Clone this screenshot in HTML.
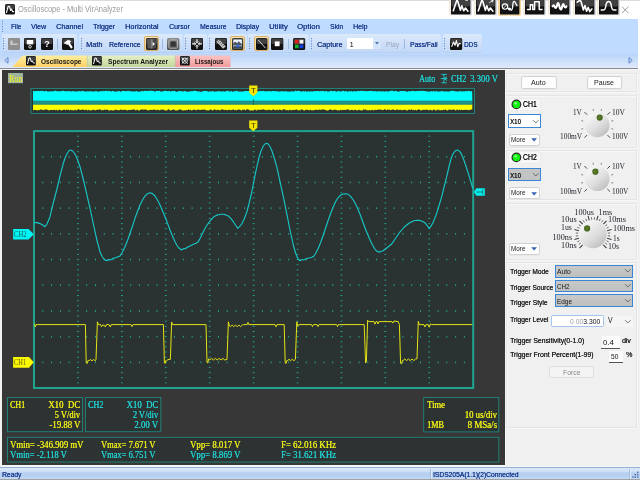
<!DOCTYPE html>
<html lang="en"><head><meta charset="utf-8"><title>Oscilloscope - Multi VirAnalyzer</title><style>
html,body{margin:0;padding:0;}
body{width:640px;height:480px;overflow:hidden;background:#fff;position:relative;}
#app{position:absolute;left:0;top:0;width:640px;height:480px;overflow:hidden;will-change:transform;}
#app div,#app svg,#app .t{position:absolute;}
#app svg{overflow:visible;display:block;}
.t{white-space:nowrap;line-height:normal;display:block;}
.ss{font-family:"Liberation Sans",sans-serif;}
.sf{font-family:"Liberation Serif",serif;}
</style></head><body><div id="app"><div style="left:0.00px;top:0.00px;width:640.00px;height:19.00px;background:#fff;border-top:0.6px solid #dcdcdc;box-sizing:border-box;"></div><svg style="left:5.00px;top:4.00px;" width="10" height="10.5" viewBox="0 0 10 10.5"><rect x="0" y="0" width="10" height="10.5" rx="1.5" fill="#111"/><rect x="0.5" y="0.5" width="9" height="4.725" rx="1.5" fill="#fff" opacity="0.2"/><path d="M1.5 8.5 L3.2 2.2 L4.4 2.2 L5.6 6.5 L6.6 5.2 L7.6 7.6 L8.7 7.6" stroke="#fff" stroke-width="1.1" fill="none" stroke-linecap="round" stroke-linejoin="round" /></svg><span id="t0" class="t ss" style="top:5.18px;font-size:8.20px;color:#9a9a9a;left:18.00px;transform-origin:0 0;transform:scaleX(0.913);">Oscilloscope - Multi VirAnalyzer</span><div style="left:448.80px;top:-1.00px;width:23.40px;height:16.60px;background:linear-gradient(90deg,#ece3cf 0,#fbfbfb 12%,#fbfbfb 84%,#d4d8de 100%);border-radius:2px;"></div><svg style="left:450.80px;top:-1.00px;" width="19.4" height="15.6" viewBox="0 0 19.4 15.6"><rect x="0" y="0" width="19.4" height="15.6" rx="1.2" fill="#111"/><rect x="0.5" y="0.5" width="18.4" height="7.02" rx="1.2" fill="#fff" opacity="0.2"/><path d="M2.3 11.8 L5.5 2.2 Q6.1 0.9 6.8 2.4 L9.4 11.3 L10.8 6.8 L12.7 11.8 L14.5 9 L16.9 12.2" stroke="#fff" stroke-width="1.6" fill="none" stroke-linecap="round" stroke-linejoin="round" /><path d="M14.6 1.2 Q17.6 2.2 17.4 0.2" stroke="#fff" stroke-width="1" fill="none" stroke-linecap="round" stroke-linejoin="round" /></svg><div style="left:474.00px;top:-1.00px;width:23.40px;height:16.60px;background:linear-gradient(90deg,#ece3cf 0,#fbfbfb 12%,#fbfbfb 84%,#d4d8de 100%);border-radius:2px;"></div><svg style="left:476.00px;top:-1.00px;" width="19.4" height="15.6" viewBox="0 0 19.4 15.6"><rect x="0" y="0" width="19.4" height="15.6" rx="1.2" fill="#111"/><rect x="0.5" y="0.5" width="18.4" height="7.02" rx="1.2" fill="#fff" opacity="0.2"/><path d="M2.3 11.8 L5.5 2.2 Q6.1 0.9 6.8 2.4 L9.4 11.3 L10.8 6.8 L12.7 11.8 L14.5 9 L16.9 12.2" stroke="#fff" stroke-width="1.6" fill="none" stroke-linecap="round" stroke-linejoin="round" /><path d="M13.6 3.6 L17 1.2 M15.2 1 L17 1.2 L16.6 3" stroke="#fff" stroke-width="0.9" fill="none" stroke-linecap="round" stroke-linejoin="round" /></svg><div style="left:498.00px;top:-1.00px;width:23.40px;height:16.60px;background:linear-gradient(90deg,#f3d49a,#f7e6c4 50%,#f3d49a);border-radius:2px;"></div><svg style="left:500.00px;top:-1.00px;" width="19.4" height="15.6" viewBox="0 0 19.4 15.6"><rect x="0" y="0" width="19.4" height="15.6" rx="1.2" fill="#111"/><rect x="0.5" y="0.5" width="18.4" height="7.02" rx="1.2" fill="#fff" opacity="0.2"/><circle cx="5" cy="7.6" r="2.7" fill="none" stroke="#fff" stroke-width="1.1"/><path d="M3.8 8.8 L6.2 6.4" stroke="#fff" stroke-width="0.8" fill="none" stroke-linecap="round" stroke-linejoin="round" /><path d="M7 9.6 Q9.5 7.4 11 9.6 Q12 11.6 9 11.4 Z" fill="#fff"/><path d="M11.4 11.2 Q12.6 10.5 12.8 6 Q13.2 1.4 14.8 2.8 L17 6.6" stroke="#fff" stroke-width="1.3" fill="none" stroke-linecap="round" stroke-linejoin="round" /></svg><div style="left:522.90px;top:-1.00px;width:23.40px;height:16.60px;background:linear-gradient(90deg,#ece3cf 0,#fbfbfb 12%,#fbfbfb 84%,#d4d8de 100%);border-radius:2px;"></div><svg style="left:524.90px;top:-1.00px;" width="19.4" height="15.6" viewBox="0 0 19.4 15.6"><rect x="0" y="0" width="19.4" height="15.6" rx="1.2" fill="#111"/><rect x="0.5" y="0.5" width="18.4" height="7.02" rx="1.2" fill="#fff" opacity="0.2"/><path d="M2.5 10.4 H5.3 V5.7 H7.7 V10.4 H9.6 V2.7 H14.2 V10.4 H17" stroke="#fff" stroke-width="1.5" fill="none" stroke-linecap="round" stroke-linejoin="round" /></svg><div style="left:548.00px;top:-1.00px;width:23.40px;height:16.60px;background:linear-gradient(90deg,#ece3cf 0,#fbfbfb 12%,#fbfbfb 84%,#d4d8de 100%);border-radius:2px;"></div><svg style="left:550.00px;top:-1.00px;" width="19.4" height="15.6" viewBox="0 0 19.4 15.6"><rect x="0" y="0" width="19.4" height="15.6" rx="1.2" fill="#111"/><rect x="0.5" y="0.5" width="18.4" height="7.02" rx="1.2" fill="#fff" opacity="0.2"/><path d="M2.6 7.4 Q3.6 5 4.6 7.4 Q5.6 10.6 6.8 7.4 Q8 0.6 9.4 7.4 Q10.8 13.6 12.2 7.4 Q13.4 2.6 14.4 7.4 Q15.2 9.6 16.4 7.4" stroke="#fff" stroke-width="2.1" fill="none" stroke-linecap="round" stroke-linejoin="round" /></svg><div style="left:572.80px;top:-1.00px;width:23.40px;height:16.60px;background:linear-gradient(90deg,#ece3cf 0,#fbfbfb 12%,#fbfbfb 84%,#d4d8de 100%);border-radius:2px;"></div><svg style="left:574.80px;top:-1.00px;" width="19.4" height="15.6" viewBox="0 0 19.4 15.6"><rect x="0" y="0" width="19.4" height="15.6" rx="1.2" fill="#111"/><rect x="0.5" y="0.5" width="18.4" height="7.02" rx="1.2" fill="#fff" opacity="0.2"/><path d="M2.3 3.2 L4.4 1.6 Q5.6 1.2 6.2 3 L8.4 11 L10 6.6 L11.6 12.2 L13.2 8.4 L14.8 12.6 L16.8 10" stroke="#fff" stroke-width="1.6" fill="none" stroke-linecap="round" stroke-linejoin="round" /></svg><div style="left:596.60px;top:-1.00px;width:23.40px;height:16.60px;background:linear-gradient(90deg,#ece3cf 0,#fbfbfb 12%,#fbfbfb 84%,#d4d8de 100%);border-radius:2px;"></div><svg style="left:598.60px;top:-1.00px;" width="19.4" height="15.6" viewBox="0 0 19.4 15.6"><rect x="0" y="0" width="19.4" height="15.6" rx="1.2" fill="#111"/><rect x="0.5" y="0.5" width="18.4" height="7.02" rx="1.2" fill="#fff" opacity="0.2"/><path d="M2.2 11 H4.6 Q6.4 11 7 6 Q7.6 2.4 9.6 2.4 Q11.6 2.4 12.2 6 Q12.8 11 14.6 11 H17" stroke="#fff" stroke-width="1.5" fill="none" stroke-linecap="round" stroke-linejoin="round" /></svg><svg style="left:621.00px;top:5.50px;" width="9" height="8" viewBox="0 0 9 8"><path d="M1.2 0.9 L7.2 6.9 M7.2 0.9 L1.2 6.9" stroke="#8a8a8a" stroke-width="0.85" fill="none" stroke-linecap="round" stroke-linejoin="round" /></svg><div style="left:0.00px;top:19.00px;width:640.00px;height:35.00px;background:#bfdbff;"></div><svg style="left:2.40px;top:21.20px;" width="2.4" height="12" viewBox="0 0 2.4 12"><rect x="0.6" y="0.6" width="1.2" height="1.2" fill="#eef4fd"/><rect x="0" y="0" width="1.2" height="1.2" fill="#5f8ad0"/><rect x="0.6" y="3.1" width="1.2" height="1.2" fill="#eef4fd"/><rect x="0" y="2.5" width="1.2" height="1.2" fill="#5f8ad0"/><rect x="0.6" y="5.6" width="1.2" height="1.2" fill="#eef4fd"/><rect x="0" y="5" width="1.2" height="1.2" fill="#5f8ad0"/><rect x="0.6" y="8.1" width="1.2" height="1.2" fill="#eef4fd"/><rect x="0" y="7.5" width="1.2" height="1.2" fill="#5f8ad0"/><rect x="0.6" y="10.6" width="1.2" height="1.2" fill="#eef4fd"/><rect x="0" y="10" width="1.2" height="1.2" fill="#5f8ad0"/></svg><span id="t1" class="t ss" style="top:22.44px;font-size:7.80px;color:#1b3b8a;left:10.50px;transform-origin:0 0;transform:scaleX(0.815);text-shadow:0.2px 0 0 #1b3b8a;">File</span><span id="t2" class="t ss" style="top:22.44px;font-size:7.80px;color:#1b3b8a;left:31.00px;transform-origin:0 0;transform:scaleX(0.895);text-shadow:0.2px 0 0 #1b3b8a;">View</span><span id="t3" class="t ss" style="top:22.44px;font-size:7.80px;color:#1b3b8a;left:56.00px;transform-origin:0 0;transform:scaleX(0.930);text-shadow:0.2px 0 0 #1b3b8a;">Channel</span><span id="t4" class="t ss" style="top:22.44px;font-size:7.80px;color:#1b3b8a;left:92.50px;transform-origin:0 0;transform:scaleX(0.901);text-shadow:0.2px 0 0 #1b3b8a;">Trigger</span><span id="t5" class="t ss" style="top:22.44px;font-size:7.80px;color:#1b3b8a;left:125.25px;transform-origin:0 0;transform:scaleX(0.954);text-shadow:0.2px 0 0 #1b3b8a;">Horizontal</span><span id="t6" class="t ss" style="top:22.44px;font-size:7.80px;color:#1b3b8a;left:168.75px;transform-origin:0 0;transform:scaleX(0.887);text-shadow:0.2px 0 0 #1b3b8a;">Cursor</span><span id="t7" class="t ss" style="top:22.44px;font-size:7.80px;color:#1b3b8a;left:199.50px;transform-origin:0 0;transform:scaleX(0.873);text-shadow:0.2px 0 0 #1b3b8a;">Measure</span><span id="t8" class="t ss" style="top:22.44px;font-size:7.80px;color:#1b3b8a;left:236.00px;transform-origin:0 0;transform:scaleX(0.899);text-shadow:0.2px 0 0 #1b3b8a;">Display</span><span id="t9" class="t ss" style="top:22.44px;font-size:7.80px;color:#1b3b8a;left:268.75px;transform-origin:0 0;transform:scaleX(0.984);text-shadow:0.2px 0 0 #1b3b8a;">Utility</span><span id="t10" class="t ss" style="top:22.44px;font-size:7.80px;color:#1b3b8a;left:297.25px;transform-origin:0 0;transform:scaleX(0.990);text-shadow:0.2px 0 0 #1b3b8a;">Option</span><span id="t11" class="t ss" style="top:22.44px;font-size:7.80px;color:#1b3b8a;left:330.00px;transform-origin:0 0;transform:scaleX(0.857);text-shadow:0.2px 0 0 #1b3b8a;">Skin</span><span id="t12" class="t ss" style="top:22.44px;font-size:7.80px;color:#1b3b8a;left:353.00px;transform-origin:0 0;transform:scaleX(0.904);text-shadow:0.2px 0 0 #1b3b8a;">Help</span><div style="left:1.50px;top:34.20px;width:75.50px;height:18.10px;background:linear-gradient(#dce9fb,#cddff8 55%,#c3d8f6);border-radius:2px;box-shadow:0 0.6px 0 #a9c4ea;"></div><div style="left:79.00px;top:34.20px;width:104.00px;height:18.10px;background:linear-gradient(#dce9fb,#cddff8 55%,#c3d8f6);border-radius:2px;box-shadow:0 0.6px 0 #a9c4ea;"></div><div style="left:184.00px;top:34.20px;width:23.00px;height:18.10px;background:linear-gradient(#dce9fb,#cddff8 55%,#c3d8f6);border-radius:2px;box-shadow:0 0.6px 0 #a9c4ea;"></div><div style="left:208.00px;top:34.20px;width:39.00px;height:18.10px;background:linear-gradient(#dce9fb,#cddff8 55%,#c3d8f6);border-radius:2px;box-shadow:0 0.6px 0 #a9c4ea;"></div><div style="left:248.00px;top:34.20px;width:61.00px;height:18.10px;background:linear-gradient(#dce9fb,#cddff8 55%,#c3d8f6);border-radius:2px;box-shadow:0 0.6px 0 #a9c4ea;"></div><div style="left:309.50px;top:34.20px;width:131.50px;height:18.10px;background:linear-gradient(#dce9fb,#cddff8 55%,#c3d8f6);border-radius:2px;box-shadow:0 0.6px 0 #a9c4ea;"></div><div style="left:442.50px;top:34.20px;width:39.50px;height:18.10px;background:linear-gradient(#dce9fb,#cddff8 55%,#c3d8f6);border-radius:2px;box-shadow:0 0.6px 0 #a9c4ea;"></div><svg style="left:3.20px;top:37.60px;" width="2.4" height="13" viewBox="0 0 2.4 13"><rect x="0.6" y="0.6" width="1.2" height="1.2" fill="#eef4fd"/><rect x="0" y="0" width="1.2" height="1.2" fill="#5f8ad0"/><rect x="0.6" y="3.1" width="1.2" height="1.2" fill="#eef4fd"/><rect x="0" y="2.5" width="1.2" height="1.2" fill="#5f8ad0"/><rect x="0.6" y="5.6" width="1.2" height="1.2" fill="#eef4fd"/><rect x="0" y="5" width="1.2" height="1.2" fill="#5f8ad0"/><rect x="0.6" y="8.1" width="1.2" height="1.2" fill="#eef4fd"/><rect x="0" y="7.5" width="1.2" height="1.2" fill="#5f8ad0"/><rect x="0.6" y="10.6" width="1.2" height="1.2" fill="#eef4fd"/><rect x="0" y="10" width="1.2" height="1.2" fill="#5f8ad0"/></svg><svg style="left:80.50px;top:37.60px;" width="2.4" height="13" viewBox="0 0 2.4 13"><rect x="0.6" y="0.6" width="1.2" height="1.2" fill="#eef4fd"/><rect x="0" y="0" width="1.2" height="1.2" fill="#5f8ad0"/><rect x="0.6" y="3.1" width="1.2" height="1.2" fill="#eef4fd"/><rect x="0" y="2.5" width="1.2" height="1.2" fill="#5f8ad0"/><rect x="0.6" y="5.6" width="1.2" height="1.2" fill="#eef4fd"/><rect x="0" y="5" width="1.2" height="1.2" fill="#5f8ad0"/><rect x="0.6" y="8.1" width="1.2" height="1.2" fill="#eef4fd"/><rect x="0" y="7.5" width="1.2" height="1.2" fill="#5f8ad0"/><rect x="0.6" y="10.6" width="1.2" height="1.2" fill="#eef4fd"/><rect x="0" y="10" width="1.2" height="1.2" fill="#5f8ad0"/></svg><svg style="left:185.40px;top:37.60px;" width="2.4" height="13" viewBox="0 0 2.4 13"><rect x="0.6" y="0.6" width="1.2" height="1.2" fill="#eef4fd"/><rect x="0" y="0" width="1.2" height="1.2" fill="#5f8ad0"/><rect x="0.6" y="3.1" width="1.2" height="1.2" fill="#eef4fd"/><rect x="0" y="2.5" width="1.2" height="1.2" fill="#5f8ad0"/><rect x="0.6" y="5.6" width="1.2" height="1.2" fill="#eef4fd"/><rect x="0" y="5" width="1.2" height="1.2" fill="#5f8ad0"/><rect x="0.6" y="8.1" width="1.2" height="1.2" fill="#eef4fd"/><rect x="0" y="7.5" width="1.2" height="1.2" fill="#5f8ad0"/><rect x="0.6" y="10.6" width="1.2" height="1.2" fill="#eef4fd"/><rect x="0" y="10" width="1.2" height="1.2" fill="#5f8ad0"/></svg><svg style="left:209.20px;top:37.60px;" width="2.4" height="13" viewBox="0 0 2.4 13"><rect x="0.6" y="0.6" width="1.2" height="1.2" fill="#eef4fd"/><rect x="0" y="0" width="1.2" height="1.2" fill="#5f8ad0"/><rect x="0.6" y="3.1" width="1.2" height="1.2" fill="#eef4fd"/><rect x="0" y="2.5" width="1.2" height="1.2" fill="#5f8ad0"/><rect x="0.6" y="5.6" width="1.2" height="1.2" fill="#eef4fd"/><rect x="0" y="5" width="1.2" height="1.2" fill="#5f8ad0"/><rect x="0.6" y="8.1" width="1.2" height="1.2" fill="#eef4fd"/><rect x="0" y="7.5" width="1.2" height="1.2" fill="#5f8ad0"/><rect x="0.6" y="10.6" width="1.2" height="1.2" fill="#eef4fd"/><rect x="0" y="10" width="1.2" height="1.2" fill="#5f8ad0"/></svg><svg style="left:249.20px;top:37.60px;" width="2.4" height="13" viewBox="0 0 2.4 13"><rect x="0.6" y="0.6" width="1.2" height="1.2" fill="#eef4fd"/><rect x="0" y="0" width="1.2" height="1.2" fill="#5f8ad0"/><rect x="0.6" y="3.1" width="1.2" height="1.2" fill="#eef4fd"/><rect x="0" y="2.5" width="1.2" height="1.2" fill="#5f8ad0"/><rect x="0.6" y="5.6" width="1.2" height="1.2" fill="#eef4fd"/><rect x="0" y="5" width="1.2" height="1.2" fill="#5f8ad0"/><rect x="0.6" y="8.1" width="1.2" height="1.2" fill="#eef4fd"/><rect x="0" y="7.5" width="1.2" height="1.2" fill="#5f8ad0"/><rect x="0.6" y="10.6" width="1.2" height="1.2" fill="#eef4fd"/><rect x="0" y="10" width="1.2" height="1.2" fill="#5f8ad0"/></svg><svg style="left:310.60px;top:37.60px;" width="2.4" height="13" viewBox="0 0 2.4 13"><rect x="0.6" y="0.6" width="1.2" height="1.2" fill="#eef4fd"/><rect x="0" y="0" width="1.2" height="1.2" fill="#5f8ad0"/><rect x="0.6" y="3.1" width="1.2" height="1.2" fill="#eef4fd"/><rect x="0" y="2.5" width="1.2" height="1.2" fill="#5f8ad0"/><rect x="0.6" y="5.6" width="1.2" height="1.2" fill="#eef4fd"/><rect x="0" y="5" width="1.2" height="1.2" fill="#5f8ad0"/><rect x="0.6" y="8.1" width="1.2" height="1.2" fill="#eef4fd"/><rect x="0" y="7.5" width="1.2" height="1.2" fill="#5f8ad0"/><rect x="0.6" y="10.6" width="1.2" height="1.2" fill="#eef4fd"/><rect x="0" y="10" width="1.2" height="1.2" fill="#5f8ad0"/></svg><svg style="left:443.80px;top:37.60px;" width="2.4" height="13" viewBox="0 0 2.4 13"><rect x="0.6" y="0.6" width="1.2" height="1.2" fill="#eef4fd"/><rect x="0" y="0" width="1.2" height="1.2" fill="#5f8ad0"/><rect x="0.6" y="3.1" width="1.2" height="1.2" fill="#eef4fd"/><rect x="0" y="2.5" width="1.2" height="1.2" fill="#5f8ad0"/><rect x="0.6" y="5.6" width="1.2" height="1.2" fill="#eef4fd"/><rect x="0" y="5" width="1.2" height="1.2" fill="#5f8ad0"/><rect x="0.6" y="8.1" width="1.2" height="1.2" fill="#eef4fd"/><rect x="0" y="7.5" width="1.2" height="1.2" fill="#5f8ad0"/><rect x="0.6" y="10.6" width="1.2" height="1.2" fill="#eef4fd"/><rect x="0" y="10" width="1.2" height="1.2" fill="#5f8ad0"/></svg><svg style="left:7.50px;top:37.50px;" width="12" height="12.1" viewBox="0 0 12 12.1"><rect width="12" height="12.1" rx="1" fill="#8f8f8f"/><path d="M2.3 2.5h2.4v3h4.8v1.6h-7.2z" fill="#c9c9c9"/></svg><svg style="left:24.00px;top:37.50px;" width="12" height="12.1" viewBox="0 0 12 12.1"><rect x="0" y="0" width="12" height="12.1" rx="1.5" fill="#111"/><rect x="0.5" y="0.5" width="11" height="5.445" rx="1.5" fill="#fff" opacity="0.2"/><rect x="2.8" y="2" width="6.4" height="4.4" fill="#fff"/><circle cx="6" cy="8.8" r="1.3" fill="none" stroke="#fff" stroke-width="0.8"/></svg><svg style="left:40.70px;top:37.50px;" width="12" height="12.1" viewBox="0 0 12 12.1"><rect x="0" y="0" width="12" height="12.1" rx="1.5" fill="#111"/><rect x="0.5" y="0.5" width="11" height="5.445" rx="1.5" fill="#fff" opacity="0.2"/></svg><span id="t13" class="t ss" style="top:39.16px;font-size:9.00px;color:#fff;left:44.30px;transform-origin:0 0;font-weight:bold;">?</span><div style="left:57.00px;top:38.50px;width:0.80px;height:10.50px;background:#9db9e3;"></div><svg style="left:62.00px;top:37.50px;" width="12" height="12.1" viewBox="0 0 12 12.1"><rect x="0" y="0" width="12" height="12.1" rx="1.5" fill="#111"/><rect x="0.5" y="0.5" width="11" height="5.445" rx="1.5" fill="#fff" opacity="0.2"/><path d="M2.6 4.8 L6.2 2.2 L8.8 3.4 L5.6 6.2 Z" stroke="#fff" stroke-width="0.9" fill="#fff" stroke-linecap="round" stroke-linejoin="round" /><path d="M6.4 4.8 L9.4 9.2" stroke="#fff" stroke-width="2.3" fill="none" stroke-linecap="round" stroke-linejoin="round" /></svg><span id="t14" class="t ss" style="top:40.24px;font-size:7.80px;color:#1b3b8a;left:86.00px;transform-origin:0 0;transform:scaleX(0.951);text-shadow:0.2px 0 0 #1b3b8a;">Math</span><span id="t15" class="t ss" style="top:40.24px;font-size:7.80px;color:#1b3b8a;left:108.75px;transform-origin:0 0;transform:scaleX(0.875);text-shadow:0.2px 0 0 #1b3b8a;">Reference</span><div style="left:144.20px;top:36.30px;width:15.20px;height:14.60px;background:linear-gradient(#fbe3b0,#f6cf8a);border:0.8px solid #d9b36a;border-radius:2px;box-sizing:border-box;"></div><svg style="left:146.00px;top:37.50px;" width="11.6" height="12.1" viewBox="0 0 11.6 12.1"><rect x="0" y="0" width="11.6" height="12.1" rx="1.5" fill="#262626"/><rect x="0.5" y="0.5" width="10.6" height="5.445" rx="1.5" fill="#fff" opacity="0.2"/><rect x="1.6" y="1.6" width="4" height="8.8" fill="#5c5c5c"/><rect x="6.4" y="1.6" width="3.6" height="8.8" fill="#4a4a4a"/><rect x="5.6" y="1.2" width="0.7" height="9.6" fill="#d0d0d0"/><path d="M6.6 4l2.4 2-2.4 2z" fill="#fff"/></svg><div style="left:162.40px;top:38.50px;width:0.80px;height:10.50px;background:#9db9e3;"></div><svg style="left:167.00px;top:37.50px;" width="12.4" height="12.1" viewBox="0 0 12.4 12.1"><defs><linearGradient id="gq" x1="0" y1="0" x2="0" y2="1"><stop offset="0" stop-color="#8c8c8c"/><stop offset="1" stop-color="#4c4c4c"/></linearGradient></defs><rect width="12.4" height="12.1" rx="1.5" fill="url(#gq)"/><rect x="1.9" y="1.9" width="8.6" height="8.3" rx="0.8" fill="none" stroke="#c4c4c4" stroke-width="0.8"/><rect x="3.6" y="3.5" width="5.2" height="5" fill="#353535"/></svg><svg style="left:191.00px;top:37.50px;" width="12" height="12.1" viewBox="0 0 12 12.1"><rect x="0" y="0" width="12" height="12.1" rx="1.5" fill="#111"/><rect x="0.5" y="0.5" width="11" height="5.445" rx="1.5" fill="#fff" opacity="0.2"/><path d="M6 1.6V4.2M6 10.2V7.6M1.6 5.9H4.2M10.4 5.9H7.8" stroke="#fff" stroke-width="1.1" fill="none" stroke-linecap="round" stroke-linejoin="round" /><path d="M4.9 3.6L6 4.8 7.1 3.6M4.9 8.2L6 7 7.1 8.2M3.6 4.8L4.8 5.9 3.6 7M8.4 4.8L7.2 5.9 8.4 7" stroke="#fff" stroke-width="0.8" fill="none" stroke-linecap="round" stroke-linejoin="round" /></svg><svg style="left:215.00px;top:37.50px;" width="12" height="12.1" viewBox="0 0 12 12.1"><rect x="0" y="0" width="12" height="12.1" rx="1.5" fill="#111"/><rect x="0.5" y="0.5" width="11" height="5.445" rx="1.5" fill="#fff" opacity="0.2"/><path d="M1.4 3.8 L4.2 1.4 L10.8 8.4 L8 10.8 Z" fill="#c9c9c9"/><path d="M3.6 3.4l1.3-1.1M5 5l1.3-1.1M6.4 6.5l1.3-1.1M7.8 8l1.3-1.1" stroke="#333" stroke-width="0.6" fill="none" stroke-linecap="round" stroke-linejoin="round" /><path d="M2.6 4.9l0.8-.7M4.1 6.5l0.8-.7M5.6 8l0.8-.7" stroke="#444" stroke-width="0.5" fill="none" stroke-linecap="round" stroke-linejoin="round" /></svg><div style="left:230.20px;top:36.30px;width:14.60px;height:14.60px;background:linear-gradient(#fbe3b0,#f6cf8a);border:0.8px solid #d9b36a;border-radius:2px;box-sizing:border-box;"></div><svg style="left:232.00px;top:37.50px;" width="11.2" height="12.1" viewBox="0 0 11.2 12.1"><rect x="0" y="0" width="11.2" height="12.1" rx="1.5" fill="#2a2a2a"/><rect x="0.5" y="0.5" width="10.2" height="5.445" rx="1.5" fill="#fff" opacity="0.2"/><rect x="1.3" y="1.5" width="8.6" height="8.8" fill="#e6eef8"/><path d="M1.3 5.2l2-1.6 1.8 1.6 1.6-2 3.2 3v1.2h-8.6z" fill="#4a5560"/><path d="M1.3 8.2h8.6v2.1h-8.6z" fill="#38404a"/><path d="M4.2 7.2l1.6-1 1.8 1.4-1 2-2.2-.4z" fill="#3a6ad8"/><path d="M2 2.2h2.2v1.2h-2.2zM6.8 2h2.4v1h-2.4z" fill="#fff"/></svg><div style="left:253.80px;top:36.30px;width:15.00px;height:14.60px;background:linear-gradient(#fbe3b0,#f6cf8a);border:0.8px solid #d9b36a;border-radius:2px;box-sizing:border-box;"></div><svg style="left:255.60px;top:37.50px;" width="11.4" height="12.1" viewBox="0 0 11.4 12.1"><rect x="0" y="0" width="11.4" height="12.1" rx="1.5" fill="#111"/><rect x="0.5" y="0.5" width="10.4" height="5.445" rx="1.5" fill="#fff" opacity="0.2"/><path d="M2.4 2.2L9.2 9.8" stroke="#e8e8e8" stroke-width="0.9" fill="none" stroke-linecap="round" stroke-linejoin="round" /></svg><svg style="left:271.20px;top:37.50px;" width="12.3" height="12.1" viewBox="0 0 12.3 12.1"><rect x="0" y="0" width="12.3" height="12.1" rx="1.5" fill="#111"/><rect x="0.5" y="0.5" width="11.3" height="5.445" rx="1.5" fill="#fff" opacity="0.2"/><rect x="3.8" y="3.4" width="4.8" height="4.8" fill="#fff"/></svg><div style="left:287.50px;top:38.50px;width:0.80px;height:10.50px;background:#9db9e3;"></div><svg style="left:292.60px;top:37.50px;" width="12.2" height="12.1" viewBox="0 0 12.2 12.1"><rect x="0" y="0" width="12.2" height="12.1" rx="1.5" fill="#111"/><rect x="0.5" y="0.5" width="11.2" height="5.445" rx="1.5" fill="#fff" opacity="0.2"/><rect x="1.9" y="1.8" width="3.8" height="3.8" fill="#e02020"/><rect x="6.6" y="1.8" width="3.8" height="3.8" fill="#f4f4f4"/><rect x="1.9" y="6.5" width="3.8" height="3.8" fill="#18b030"/><rect x="6.6" y="6.5" width="3.8" height="3.8" fill="#1840e0"/></svg><span id="t16" class="t ss" style="top:40.24px;font-size:7.80px;color:#1b3b8a;left:317.00px;transform-origin:0 0;transform:scaleX(0.919);text-shadow:0.2px 0 0 #1b3b8a;">Capture</span><div style="left:347.00px;top:37.60px;width:34.00px;height:11.60px;background:#fff;border-radius:1px;"></div><div style="left:373.40px;top:37.60px;width:7.60px;height:11.60px;background:#d3e4fb;"></div><svg style="left:375.30px;top:42.00px;" width="4" height="3" viewBox="0 0 4 3"><path d="M0 0h4l-2 2.4z" fill="#4a6ea8"/></svg><span id="t17" class="t ss" style="top:40.24px;font-size:7.80px;color:#222;left:349.60px;transform-origin:0 0;">1</span><span id="t18" class="t ss" style="top:40.24px;font-size:7.80px;color:#9aa7bd;left:386.00px;transform-origin:0 0;transform:scaleX(0.857);">Play</span><div style="left:403.60px;top:38.50px;width:0.80px;height:10.50px;background:#9db9e3;"></div><span id="t19" class="t ss" style="top:40.24px;font-size:7.80px;color:#1b3b8a;left:409.50px;transform-origin:0 0;transform:scaleX(0.857);text-shadow:0.2px 0 0 #1b3b8a;">Pass/Fail</span><svg style="left:449.50px;top:37.50px;" width="12.2" height="12.1" viewBox="0 0 12.2 12.1"><rect x="0" y="0" width="12.2" height="12.1" rx="1.5" fill="#111"/><rect x="0.5" y="0.5" width="11.2" height="5.445" rx="1.5" fill="#fff" opacity="0.2"/><path d="M1.8 8.4 L3.6 4 L5 7.4 L6.4 2.6 L7.8 8.8 L9 5.6 L10.4 5.6" stroke="#fff" stroke-width="1.1" fill="none" stroke-linecap="round" stroke-linejoin="round" /></svg><span id="t20" class="t ss" style="top:40.24px;font-size:7.80px;color:#1b3b8a;left:464.00px;transform-origin:0 0;transform:scaleX(0.820);text-shadow:0.2px 0 0 #1b3b8a;">DDS</span><div style="left:0.00px;top:53.50px;width:640.00px;height:14.50px;background:linear-gradient(#b9d4f7,#dfeafb);"></div><svg style="left:3.50px;top:56.50px;" width="5" height="7" viewBox="0 0 5 7"><path d="M4 0.6 L0.8 3.4 L4 6.2 Z" fill="#c8dcf6" stroke="#4f78c8" stroke-width="0.85"/></svg><svg style="left:628.00px;top:57.00px;" width="5" height="7" viewBox="0 0 5 7"><path d="M1 0.6 L4.2 3.4 L1 6.2 Z" fill="#c8dcf6" stroke="#4f78c8" stroke-width="0.85"/></svg><svg style="left:0.00px;top:54.00px;" width="240" height="14" viewBox="0 0 240 14"><defs><linearGradient id="gy" x1="0" y1="0" x2="0" y2="1"><stop offset="0" stop-color="#ffeea0"/><stop offset="1" stop-color="#ffd166"/></linearGradient><linearGradient id="gg" x1="0" y1="0" x2="0" y2="1"><stop offset="0" stop-color="#e4efc4"/><stop offset="1" stop-color="#c3d69b"/></linearGradient><linearGradient id="gr" x1="0" y1="0" x2="0" y2="1"><stop offset="0" stop-color="#f9c4c4"/><stop offset="1" stop-color="#f29a9a"/></linearGradient></defs><path d="M175 13 V1.5 H230.5 V13 Z" fill="url(#gr)"/><path d="M87 13 V1.5 H175 V13 Z" fill="url(#gg)"/><path d="M12.5 13 L21.5 2.6 Q22.6 1.5 24 1.5 H87 V13 Z" fill="url(#gy)"/><path d="M87.3 1.5V13M175.3 1.5V13" stroke="#b9c6a0" stroke-width="0.6"/></svg><svg style="left:26.20px;top:56.40px;" width="9.8" height="9.4" viewBox="0 0 9.8 9.4"><rect x="0" y="0" width="9.8" height="9.4" rx="1.2" fill="#111"/><rect x="0.5" y="0.5" width="8.8" height="4.23" rx="1.2" fill="#fff" opacity="0.2"/><path d="M1.6 7.6 L3 2 L4.2 2 L5.4 6 L6.4 4.8 L7.4 7 L8.4 7" stroke="#fff" stroke-width="1" fill="none" stroke-linecap="round" stroke-linejoin="round" /></svg><span id="t21" class="t ss" style="top:57.14px;font-size:7.80px;color:#141414;left:41.00px;transform-origin:0 0;font-weight:bold;transform:scaleX(0.834);">Oscilloscope</span><svg style="left:92.20px;top:56.40px;" width="9.8" height="9.4" viewBox="0 0 9.8 9.4"><rect x="0" y="0" width="9.8" height="9.4" rx="1.2" fill="#111"/><rect x="0.5" y="0.5" width="8.8" height="4.23" rx="1.2" fill="#fff" opacity="0.2"/><path d="M1.6 7.6 L3 2 L4.2 2 L5.4 6 L6.4 4.8 L7.4 7 L8.4 7" stroke="#fff" stroke-width="1" fill="none" stroke-linecap="round" stroke-linejoin="round" /></svg><span id="t22" class="t ss" style="top:57.14px;font-size:7.80px;color:#141414;left:107.50px;transform-origin:0 0;font-weight:bold;transform:scaleX(0.853);">Spectrum Analyzer</span><svg style="left:180.00px;top:56.40px;" width="9.8" height="9.4" viewBox="0 0 9.8 9.4"><rect x="0" y="0" width="9.8" height="9.4" rx="1.2" fill="#111"/><rect x="0.5" y="0.5" width="8.8" height="4.23" rx="1.2" fill="#fff" opacity="0.2"/><path d="M2 2 L7.6 7.4 M7.6 2 L2 7.4" stroke="#fff" stroke-width="0.9" fill="none" stroke-linecap="round" stroke-linejoin="round" /><circle cx="4.8" cy="4.7" r="2.6" fill="none" stroke="#fff" stroke-width="0.8"/></svg><span id="t23" class="t ss" style="top:57.14px;font-size:7.80px;color:#1c1414;left:195.00px;transform-origin:0 0;font-weight:bold;transform:scaleX(0.792);">Lissajous</span><div style="left:638.10px;top:19.00px;width:1.90px;height:49.00px;background:#fdfdfd;"></div><div style="left:0.00px;top:68.00px;width:638.10px;height:1.00px;background:#8c8c8c;"></div><div style="left:0.00px;top:69.00px;width:640.00px;height:398.00px;background:#f6f6f6;"></div><div style="left:2.00px;top:70.00px;width:502.50px;height:394.50px;background:#373737;"></div><svg style="left:2px;top:70px" width="502.5" height="394.5" viewBox="2 70 502.5 394.5"><rect x="8" y="73" width="15" height="10.2" fill="#9db39d"/><rect x="31" y="88.4" width="443.4" height="25" fill="#2b3232" stroke="#1f8f82" stroke-width="0.9"/><rect x="33" y="100.4" width="439.4" height="4.6" fill="#1c8a80"/><rect x="33" y="102.4" width="439.4" height="0.8" fill="#27a599"/><path d="M33 100.8 L33.0 91.06 L33.9 90.87 L34.8 91.42 L35.7 90.78 L36.6 91.29 L37.5 91.10 L38.4 90.76 L39.3 91.26 L40.2 90.74 L41.1 91.18 L42.0 90.78 L42.9 90.80 L43.8 91.17 L44.7 91.61 L45.6 90.84 L46.5 90.95 L47.4 91.39 L48.3 91.74 L49.2 91.33 L50.1 91.14 L51.0 91.77 L51.9 90.75 L52.8 91.64 L53.7 91.02 L54.6 90.86 L55.5 90.83 L56.4 91.04 L57.3 91.60 L58.2 90.90 L59.1 91.34 L60.0 91.40 L60.9 91.11 L61.8 91.30 L62.7 90.77 L63.6 90.77 L64.5 90.93 L65.4 91.45 L66.3 91.17 L67.2 91.05 L68.1 91.34 L69.0 91.20 L69.9 91.03 L70.8 91.57 L71.7 91.47 L72.6 90.97 L73.5 91.33 L74.4 91.28 L75.3 91.66 L76.2 91.50 L77.1 91.02 L78.0 91.78 L78.9 90.83 L79.8 91.16 L80.7 91.53 L81.6 90.87 L82.5 91.24 L83.4 90.74 L84.3 91.44 L85.2 91.54 L86.1 91.33 L87.0 91.66 L87.9 91.05 L88.8 91.46 L89.7 91.35 L90.6 91.34 L91.5 91.20 L92.4 91.62 L93.3 91.74 L94.2 91.22 L95.1 91.43 L96.0 90.77 L96.9 91.47 L97.8 91.41 L98.7 91.79 L99.6 91.60 L100.5 91.01 L101.4 91.12 L102.3 91.44 L103.2 90.72 L104.1 91.21 L105.0 90.88 L105.9 90.83 L106.8 90.76 L107.7 91.55 L108.6 90.84 L109.5 90.97 L110.4 91.13 L111.3 91.66 L112.2 90.79 L113.1 91.19 L114.0 91.30 L114.9 91.67 L115.8 91.60 L116.7 91.65 L117.6 91.01 L118.5 91.16 L119.4 91.09 L120.3 91.67 L121.2 91.75 L122.1 90.87 L123.0 90.89 L123.9 90.96 L124.8 90.96 L125.7 91.23 L126.6 91.35 L127.5 90.99 L128.4 90.70 L129.3 91.16 L130.2 91.11 L131.1 91.32 L132.0 91.75 L132.9 91.46 L133.8 91.27 L134.7 91.38 L135.6 91.44 L136.5 90.76 L137.4 91.69 L138.3 91.56 L139.2 91.66 L140.1 91.58 L141.0 91.13 L141.9 91.14 L142.8 90.81 L143.7 91.40 L144.6 90.77 L145.5 90.77 L146.4 90.93 L147.3 90.88 L148.2 91.07 L149.1 90.76 L150.0 90.70 L150.9 90.87 L151.8 90.81 L152.7 91.10 L153.6 90.73 L154.5 91.66 L155.4 91.38 L156.3 90.86 L157.2 90.98 L158.1 91.08 L159.0 91.10 L159.9 90.84 L160.8 91.63 L161.7 91.79 L162.6 91.21 L163.5 91.23 L164.4 90.79 L165.3 90.81 L166.2 91.08 L167.1 90.99 L168.0 91.61 L168.9 90.88 L169.8 90.73 L170.7 91.75 L171.6 91.28 L172.5 90.86 L173.4 91.30 L174.3 90.73 L175.2 91.28 L176.1 91.78 L177.0 91.65 L177.9 91.47 L178.8 90.99 L179.7 91.10 L180.6 90.88 L181.5 91.55 L182.4 91.29 L183.3 91.56 L184.2 91.06 L185.1 90.95 L186.0 91.59 L186.9 91.78 L187.8 91.64 L188.7 91.59 L189.6 91.60 L190.5 91.51 L191.4 90.95 L192.3 91.27 L193.2 91.09 L194.1 90.73 L195.0 90.73 L195.9 91.01 L196.8 90.99 L197.7 91.46 L198.6 91.75 L199.5 91.19 L200.4 91.73 L201.3 91.79 L202.2 91.75 L203.1 91.10 L204.0 90.94 L204.9 90.95 L205.8 90.92 L206.7 90.92 L207.6 91.39 L208.5 91.69 L209.4 91.62 L210.3 91.23 L211.2 91.42 L212.1 91.58 L213.0 90.79 L213.9 91.43 L214.8 91.70 L215.7 91.56 L216.6 91.53 L217.5 91.23 L218.4 90.90 L219.3 91.57 L220.2 91.07 L221.1 91.58 L222.0 91.77 L222.9 91.14 L223.8 91.14 L224.7 91.74 L225.6 91.50 L226.5 90.89 L227.4 90.84 L228.3 90.87 L229.2 91.70 L230.1 91.59 L231.0 90.86 L231.9 91.61 L232.8 91.78 L233.7 91.42 L234.6 91.09 L235.5 91.30 L236.4 90.84 L237.3 90.72 L238.2 91.77 L239.1 91.41 L240.0 91.28 L240.9 91.73 L241.8 91.18 L242.7 91.66 L243.6 91.61 L244.5 90.93 L245.4 90.98 L246.3 91.02 L247.2 90.96 L248.1 91.35 L249.0 90.99 L249.9 91.16 L250.8 90.84 L251.7 91.70 L252.6 91.09 L253.5 91.20 L254.4 91.34 L255.3 91.69 L256.2 91.16 L257.1 91.71 L258.0 91.25 L258.9 91.29 L259.8 91.28 L260.7 90.72 L261.6 91.18 L262.5 90.90 L263.4 90.70 L264.3 91.58 L265.2 90.89 L266.1 91.22 L267.0 91.50 L267.9 91.31 L268.8 91.06 L269.7 91.27 L270.6 91.31 L271.5 91.56 L272.4 90.82 L273.3 91.32 L274.2 90.97 L275.1 91.00 L276.0 91.55 L276.9 91.26 L277.8 91.32 L278.7 91.54 L279.6 91.70 L280.5 91.19 L281.4 91.37 L282.3 91.26 L283.2 91.26 L284.1 91.46 L285.0 91.20 L285.9 91.29 L286.8 91.23 L287.7 91.74 L288.6 91.47 L289.5 91.66 L290.4 91.74 L291.3 90.99 L292.2 91.32 L293.1 91.74 L294.0 91.62 L294.9 90.85 L295.8 90.83 L296.7 91.19 L297.6 90.78 L298.5 90.96 L299.4 90.78 L300.3 91.44 L301.2 91.56 L302.1 91.69 L303.0 90.87 L303.9 91.49 L304.8 91.43 L305.7 90.86 L306.6 91.67 L307.5 91.76 L308.4 90.94 L309.3 91.75 L310.2 91.14 L311.1 91.24 L312.0 91.79 L312.9 91.62 L313.8 90.88 L314.7 91.17 L315.6 91.27 L316.5 91.07 L317.4 90.92 L318.3 91.05 L319.2 91.49 L320.1 90.72 L321.0 91.31 L321.9 91.18 L322.8 90.72 L323.7 91.06 L324.6 91.39 L325.5 91.26 L326.4 90.77 L327.3 91.78 L328.2 91.57 L329.1 91.77 L330.0 90.82 L330.9 90.99 L331.8 90.74 L332.7 91.56 L333.6 91.00 L334.5 90.84 L335.4 91.16 L336.3 91.70 L337.2 91.60 L338.1 90.98 L339.0 90.86 L339.9 91.71 L340.8 91.33 L341.7 91.47 L342.6 90.80 L343.5 90.76 L344.4 91.46 L345.3 91.17 L346.2 90.78 L347.1 91.73 L348.0 91.40 L348.9 91.58 L349.8 90.79 L350.7 91.64 L351.6 90.77 L352.5 91.65 L353.4 91.20 L354.3 91.07 L355.2 91.31 L356.1 91.72 L357.0 90.99 L357.9 90.84 L358.8 91.28 L359.7 90.96 L360.6 90.82 L361.5 90.88 L362.4 90.76 L363.3 90.92 L364.2 91.04 L365.1 91.04 L366.0 91.54 L366.9 91.02 L367.8 91.25 L368.7 90.90 L369.6 91.08 L370.5 90.72 L371.4 90.98 L372.3 90.72 L373.2 91.51 L374.1 91.31 L375.0 90.91 L375.9 91.22 L376.8 91.73 L377.7 90.82 L378.6 91.60 L379.5 91.18 L380.4 91.24 L381.3 91.62 L382.2 91.13 L383.1 91.26 L384.0 91.46 L384.9 91.78 L385.8 91.08 L386.7 91.62 L387.6 91.48 L388.5 91.40 L389.4 91.15 L390.3 91.08 L391.2 90.76 L392.1 90.84 L393.0 90.78 L393.9 91.51 L394.8 90.98 L395.7 90.88 L396.6 90.79 L397.5 91.63 L398.4 91.66 L399.3 91.44 L400.2 91.01 L401.1 90.97 L402.0 91.02 L402.9 91.21 L403.8 90.87 L404.7 91.19 L405.6 90.99 L406.5 91.76 L407.4 91.77 L408.3 91.30 L409.2 90.97 L410.1 91.76 L411.0 91.04 L411.9 91.09 L412.8 90.70 L413.7 91.12 L414.6 91.22 L415.5 91.25 L416.4 90.92 L417.3 91.26 L418.2 90.71 L419.1 90.99 L420.0 90.80 L420.9 91.14 L421.8 90.75 L422.7 90.72 L423.6 91.03 L424.5 90.96 L425.4 91.34 L426.3 91.28 L427.2 91.53 L428.1 91.42 L429.0 91.49 L429.9 91.67 L430.8 91.13 L431.7 91.06 L432.6 91.78 L433.5 90.86 L434.4 91.50 L435.3 91.41 L436.2 90.75 L437.1 91.62 L438.0 91.68 L438.9 91.39 L439.8 91.51 L440.7 91.59 L441.6 90.85 L442.5 91.28 L443.4 91.25 L444.3 91.62 L445.2 91.59 L446.1 91.61 L447.0 91.34 L447.9 91.68 L448.8 91.45 L449.7 91.46 L450.6 90.95 L451.5 90.73 L452.4 90.85 L453.3 91.10 L454.2 90.82 L455.1 91.62 L456.0 91.31 L456.9 91.39 L457.8 91.39 L458.7 91.45 L459.6 91.24 L460.5 90.70 L461.4 91.58 L462.3 91.52 L463.2 91.25 L464.1 91.29 L465.0 91.43 L465.9 90.77 L466.8 91.51 L467.7 90.98 L468.6 90.78 L469.5 90.99 L470.4 91.50 L471.3 90.93 L472.2 91.51 L472.4 100.8 Z" fill="#00ffff"/><path d="M33 104.7 L472.4 104.7 L472.2 110.10 L471.3 109.33 L470.4 109.87 L469.5 109.88 L468.6 110.16 L467.7 109.85 L466.8 110.06 L465.9 109.85 L465.0 109.70 L464.1 110.12 L463.2 110.02 L462.3 110.08 L461.4 109.45 L460.5 110.39 L459.6 109.35 L458.7 110.28 L457.8 110.03 L456.9 109.35 L456.0 110.47 L455.1 110.24 L454.2 109.62 L453.3 109.46 L452.4 109.80 L451.5 109.97 L450.6 109.82 L449.7 109.58 L448.8 109.54 L447.9 110.38 L447.0 110.40 L446.1 109.83 L445.2 109.59 L444.3 110.32 L443.4 109.51 L442.5 110.37 L441.6 110.11 L440.7 110.48 L439.8 109.80 L438.9 110.50 L438.0 109.37 L437.1 109.93 L436.2 110.57 L435.3 110.53 L434.4 109.46 L433.5 109.56 L432.6 110.56 L431.7 110.35 L430.8 109.94 L429.9 109.44 L429.0 110.50 L428.1 109.98 L427.2 109.67 L426.3 109.49 L425.4 109.96 L424.5 109.78 L423.6 110.11 L422.7 109.42 L421.8 110.48 L420.9 110.13 L420.0 110.02 L419.1 109.32 L418.2 109.51 L417.3 109.90 L416.4 110.45 L415.5 109.83 L414.6 110.37 L413.7 109.85 L412.8 110.47 L411.9 109.31 L411.0 109.56 L410.1 110.25 L409.2 109.56 L408.3 109.77 L407.4 110.60 L406.5 110.42 L405.6 109.84 L404.7 109.76 L403.8 110.04 L402.9 109.71 L402.0 110.54 L401.1 109.70 L400.2 109.67 L399.3 109.83 L398.4 110.20 L397.5 109.51 L396.6 109.42 L395.7 110.13 L394.8 110.02 L393.9 109.81 L393.0 109.43 L392.1 109.38 L391.2 110.01 L390.3 110.33 L389.4 109.56 L388.5 109.71 L387.6 109.54 L386.7 110.18 L385.8 109.73 L384.9 109.31 L384.0 109.56 L383.1 110.15 L382.2 110.08 L381.3 109.63 L380.4 109.57 L379.5 109.48 L378.6 109.78 L377.7 109.58 L376.8 110.11 L375.9 110.07 L375.0 109.44 L374.1 110.53 L373.2 110.31 L372.3 109.64 L371.4 109.88 L370.5 110.43 L369.6 109.78 L368.7 110.51 L367.8 110.06 L366.9 110.56 L366.0 109.55 L365.1 109.45 L364.2 109.68 L363.3 109.35 L362.4 110.49 L361.5 110.39 L360.6 110.36 L359.7 109.92 L358.8 109.43 L357.9 110.59 L357.0 110.15 L356.1 110.35 L355.2 109.60 L354.3 109.96 L353.4 110.59 L352.5 109.81 L351.6 109.72 L350.7 110.05 L349.8 110.45 L348.9 109.50 L348.0 109.62 L347.1 109.62 L346.2 109.56 L345.3 110.26 L344.4 109.78 L343.5 110.04 L342.6 109.68 L341.7 110.39 L340.8 109.46 L339.9 110.16 L339.0 110.40 L338.1 110.27 L337.2 110.18 L336.3 110.11 L335.4 109.84 L334.5 109.60 L333.6 109.88 L332.7 110.22 L331.8 109.95 L330.9 109.43 L330.0 109.41 L329.1 109.64 L328.2 110.58 L327.3 110.45 L326.4 110.57 L325.5 109.72 L324.6 110.02 L323.7 109.34 L322.8 109.38 L321.9 109.62 L321.0 110.28 L320.1 109.56 L319.2 109.40 L318.3 110.32 L317.4 109.77 L316.5 109.72 L315.6 109.73 L314.7 110.09 L313.8 110.30 L312.9 110.37 L312.0 110.26 L311.1 110.34 L310.2 109.54 L309.3 110.51 L308.4 109.94 L307.5 109.86 L306.6 109.63 L305.7 109.80 L304.8 110.54 L303.9 110.54 L303.0 109.92 L302.1 109.60 L301.2 109.33 L300.3 110.53 L299.4 110.12 L298.5 110.49 L297.6 110.28 L296.7 109.30 L295.8 109.66 L294.9 109.71 L294.0 110.23 L293.1 109.64 L292.2 110.10 L291.3 110.54 L290.4 109.65 L289.5 109.74 L288.6 110.47 L287.7 110.27 L286.8 109.63 L285.9 110.50 L285.0 109.38 L284.1 109.35 L283.2 109.35 L282.3 110.30 L281.4 110.36 L280.5 109.83 L279.6 109.34 L278.7 110.47 L277.8 109.77 L276.9 109.55 L276.0 110.50 L275.1 109.78 L274.2 109.92 L273.3 109.36 L272.4 109.86 L271.5 110.37 L270.6 110.37 L269.7 109.76 L268.8 109.57 L267.9 110.55 L267.0 109.46 L266.1 110.54 L265.2 109.76 L264.3 109.66 L263.4 109.30 L262.5 109.52 L261.6 109.73 L260.7 109.79 L259.8 109.79 L258.9 110.16 L258.0 109.34 L257.1 110.27 L256.2 110.52 L255.3 109.54 L254.4 109.73 L253.5 110.51 L252.6 110.60 L251.7 110.25 L250.8 110.45 L249.9 110.47 L249.0 109.81 L248.1 109.38 L247.2 109.37 L246.3 109.48 L245.4 110.57 L244.5 109.58 L243.6 109.81 L242.7 109.49 L241.8 110.53 L240.9 110.16 L240.0 109.84 L239.1 109.59 L238.2 109.54 L237.3 109.94 L236.4 110.54 L235.5 109.68 L234.6 110.29 L233.7 109.59 L232.8 109.60 L231.9 110.37 L231.0 109.71 L230.1 110.56 L229.2 109.57 L228.3 109.96 L227.4 110.26 L226.5 110.34 L225.6 109.56 L224.7 110.19 L223.8 109.85 L222.9 109.74 L222.0 109.34 L221.1 109.59 L220.2 110.50 L219.3 110.17 L218.4 109.63 L217.5 109.85 L216.6 110.18 L215.7 109.95 L214.8 109.33 L213.9 109.70 L213.0 110.22 L212.1 110.55 L211.2 109.62 L210.3 109.61 L209.4 109.92 L208.5 110.45 L207.6 110.14 L206.7 110.55 L205.8 109.90 L204.9 109.69 L204.0 109.31 L203.1 110.08 L202.2 109.59 L201.3 109.80 L200.4 110.06 L199.5 109.98 L198.6 109.39 L197.7 109.45 L196.8 110.21 L195.9 110.13 L195.0 109.63 L194.1 109.47 L193.2 109.69 L192.3 110.14 L191.4 110.50 L190.5 109.60 L189.6 110.32 L188.7 109.35 L187.8 110.02 L186.9 109.89 L186.0 110.29 L185.1 110.14 L184.2 110.24 L183.3 110.52 L182.4 110.19 L181.5 109.98 L180.6 109.50 L179.7 109.44 L178.8 109.62 L177.9 110.56 L177.0 110.41 L176.1 110.37 L175.2 110.50 L174.3 109.81 L173.4 109.30 L172.5 110.06 L171.6 109.92 L170.7 110.46 L169.8 110.22 L168.9 109.34 L168.0 109.33 L167.1 110.43 L166.2 110.40 L165.3 110.54 L164.4 109.88 L163.5 109.82 L162.6 109.62 L161.7 109.65 L160.8 109.58 L159.9 110.42 L159.0 110.12 L158.1 109.95 L157.2 109.46 L156.3 110.56 L155.4 109.66 L154.5 109.38 L153.6 109.74 L152.7 109.79 L151.8 109.98 L150.9 109.84 L150.0 109.84 L149.1 110.27 L148.2 110.45 L147.3 110.04 L146.4 109.64 L145.5 109.61 L144.6 109.42 L143.7 109.74 L142.8 109.42 L141.9 109.55 L141.0 109.48 L140.1 109.88 L139.2 110.60 L138.3 110.48 L137.4 109.59 L136.5 109.95 L135.6 110.48 L134.7 109.57 L133.8 109.51 L132.9 109.52 L132.0 109.81 L131.1 110.02 L130.2 109.69 L129.3 110.15 L128.4 109.64 L127.5 110.57 L126.6 110.26 L125.7 109.69 L124.8 109.75 L123.9 109.91 L123.0 109.47 L122.1 110.50 L121.2 109.36 L120.3 109.67 L119.4 110.14 L118.5 110.28 L117.6 109.89 L116.7 110.25 L115.8 109.36 L114.9 110.24 L114.0 110.01 L113.1 110.52 L112.2 110.49 L111.3 110.12 L110.4 110.36 L109.5 110.45 L108.6 110.54 L107.7 109.79 L106.8 109.55 L105.9 109.96 L105.0 109.65 L104.1 109.62 L103.2 110.52 L102.3 109.67 L101.4 110.39 L100.5 109.43 L99.6 109.36 L98.7 109.66 L97.8 109.86 L96.9 109.77 L96.0 110.07 L95.1 110.60 L94.2 109.81 L93.3 109.78 L92.4 109.68 L91.5 110.47 L90.6 110.23 L89.7 110.50 L88.8 109.46 L87.9 110.39 L87.0 110.28 L86.1 109.30 L85.2 110.39 L84.3 109.71 L83.4 109.75 L82.5 109.48 L81.6 109.69 L80.7 109.89 L79.8 109.94 L78.9 109.30 L78.0 109.33 L77.1 109.93 L76.2 110.47 L75.3 109.60 L74.4 110.21 L73.5 110.45 L72.6 109.96 L71.7 110.37 L70.8 109.47 L69.9 110.54 L69.0 109.98 L68.1 109.48 L67.2 110.06 L66.3 109.57 L65.4 110.53 L64.5 109.57 L63.6 109.65 L62.7 109.88 L61.8 110.56 L60.9 110.37 L60.0 109.90 L59.1 109.32 L58.2 110.52 L57.3 110.57 L56.4 109.56 L55.5 110.46 L54.6 109.45 L53.7 109.91 L52.8 109.90 L51.9 109.97 L51.0 109.68 L50.1 110.18 L49.2 110.20 L48.3 110.17 L47.4 109.65 L46.5 109.38 L45.6 109.32 L44.7 110.04 L43.8 109.70 L42.9 110.27 L42.0 109.63 L41.1 109.49 L40.2 109.40 L39.3 110.14 L38.4 110.10 L37.5 110.30 L36.6 110.19 L35.7 109.92 L34.8 109.80 L33.9 109.94 L33.0 110.57 Z" fill="#ffff00"/><rect x="252.9" y="99" width="0.7" height="6" fill="#2a4a44"/><rect x="34" y="131.1" width="439.2" height="256.9" fill="#2b3232" stroke="#1ea591" stroke-width="2"/><path d="M77.1 136.2h1.7M77.1 141.4h1.7M77.1 146.5h1.7M77.1 151.7h1.7M77.1 156.8h1.7M77.1 161.9h1.7M77.1 167.1h1.7M77.1 172.2h1.7M77.1 177.3h1.7M77.1 182.5h1.7M77.1 187.6h1.7M77.1 192.8h1.7M77.1 197.9h1.7M77.1 203.0h1.7M77.1 208.2h1.7M77.1 213.3h1.7M77.1 218.4h1.7M77.1 223.6h1.7M77.1 228.7h1.7M77.1 233.9h1.7M77.1 239.0h1.7M77.1 244.1h1.7M77.1 249.3h1.7M77.1 254.4h1.7M77.1 259.5h1.7M77.1 264.7h1.7M77.1 269.8h1.7M77.1 275.0h1.7M77.1 280.1h1.7M77.1 285.2h1.7M77.1 290.4h1.7M77.1 295.5h1.7M77.1 300.7h1.7M77.1 305.8h1.7M77.1 310.9h1.7M77.1 316.1h1.7M77.1 321.2h1.7M77.1 326.3h1.7M77.1 331.5h1.7M77.1 336.6h1.7M77.1 341.8h1.7M77.1 346.9h1.7M77.1 352.0h1.7M77.1 357.2h1.7M77.1 362.3h1.7M77.1 367.4h1.7M77.1 372.6h1.7M77.1 377.7h1.7M77.1 382.9h1.7M121.0 136.2h1.7M121.0 141.4h1.7M121.0 146.5h1.7M121.0 151.7h1.7M121.0 156.8h1.7M121.0 161.9h1.7M121.0 167.1h1.7M121.0 172.2h1.7M121.0 177.3h1.7M121.0 182.5h1.7M121.0 187.6h1.7M121.0 192.8h1.7M121.0 197.9h1.7M121.0 203.0h1.7M121.0 208.2h1.7M121.0 213.3h1.7M121.0 218.4h1.7M121.0 223.6h1.7M121.0 228.7h1.7M121.0 233.9h1.7M121.0 239.0h1.7M121.0 244.1h1.7M121.0 249.3h1.7M121.0 254.4h1.7M121.0 259.5h1.7M121.0 264.7h1.7M121.0 269.8h1.7M121.0 275.0h1.7M121.0 280.1h1.7M121.0 285.2h1.7M121.0 290.4h1.7M121.0 295.5h1.7M121.0 300.7h1.7M121.0 305.8h1.7M121.0 310.9h1.7M121.0 316.1h1.7M121.0 321.2h1.7M121.0 326.3h1.7M121.0 331.5h1.7M121.0 336.6h1.7M121.0 341.8h1.7M121.0 346.9h1.7M121.0 352.0h1.7M121.0 357.2h1.7M121.0 362.3h1.7M121.0 367.4h1.7M121.0 372.6h1.7M121.0 377.7h1.7M121.0 382.9h1.7M164.9 136.2h1.7M164.9 141.4h1.7M164.9 146.5h1.7M164.9 151.7h1.7M164.9 156.8h1.7M164.9 161.9h1.7M164.9 167.1h1.7M164.9 172.2h1.7M164.9 177.3h1.7M164.9 182.5h1.7M164.9 187.6h1.7M164.9 192.8h1.7M164.9 197.9h1.7M164.9 203.0h1.7M164.9 208.2h1.7M164.9 213.3h1.7M164.9 218.4h1.7M164.9 223.6h1.7M164.9 228.7h1.7M164.9 233.9h1.7M164.9 239.0h1.7M164.9 244.1h1.7M164.9 249.3h1.7M164.9 254.4h1.7M164.9 259.5h1.7M164.9 264.7h1.7M164.9 269.8h1.7M164.9 275.0h1.7M164.9 280.1h1.7M164.9 285.2h1.7M164.9 290.4h1.7M164.9 295.5h1.7M164.9 300.7h1.7M164.9 305.8h1.7M164.9 310.9h1.7M164.9 316.1h1.7M164.9 321.2h1.7M164.9 326.3h1.7M164.9 331.5h1.7M164.9 336.6h1.7M164.9 341.8h1.7M164.9 346.9h1.7M164.9 352.0h1.7M164.9 357.2h1.7M164.9 362.3h1.7M164.9 367.4h1.7M164.9 372.6h1.7M164.9 377.7h1.7M164.9 382.9h1.7M208.8 136.2h1.7M208.8 141.4h1.7M208.8 146.5h1.7M208.8 151.7h1.7M208.8 156.8h1.7M208.8 161.9h1.7M208.8 167.1h1.7M208.8 172.2h1.7M208.8 177.3h1.7M208.8 182.5h1.7M208.8 187.6h1.7M208.8 192.8h1.7M208.8 197.9h1.7M208.8 203.0h1.7M208.8 208.2h1.7M208.8 213.3h1.7M208.8 218.4h1.7M208.8 223.6h1.7M208.8 228.7h1.7M208.8 233.9h1.7M208.8 239.0h1.7M208.8 244.1h1.7M208.8 249.3h1.7M208.8 254.4h1.7M208.8 259.5h1.7M208.8 264.7h1.7M208.8 269.8h1.7M208.8 275.0h1.7M208.8 280.1h1.7M208.8 285.2h1.7M208.8 290.4h1.7M208.8 295.5h1.7M208.8 300.7h1.7M208.8 305.8h1.7M208.8 310.9h1.7M208.8 316.1h1.7M208.8 321.2h1.7M208.8 326.3h1.7M208.8 331.5h1.7M208.8 336.6h1.7M208.8 341.8h1.7M208.8 346.9h1.7M208.8 352.0h1.7M208.8 357.2h1.7M208.8 362.3h1.7M208.8 367.4h1.7M208.8 372.6h1.7M208.8 377.7h1.7M208.8 382.9h1.7M252.8 136.2h1.7M252.8 141.4h1.7M252.8 146.5h1.7M252.8 151.7h1.7M252.8 156.8h1.7M252.8 161.9h1.7M252.8 167.1h1.7M252.8 172.2h1.7M252.8 177.3h1.7M252.8 182.5h1.7M252.8 187.6h1.7M252.8 192.8h1.7M252.8 197.9h1.7M252.8 203.0h1.7M252.8 208.2h1.7M252.8 213.3h1.7M252.8 218.4h1.7M252.8 223.6h1.7M252.8 228.7h1.7M252.8 233.9h1.7M252.8 239.0h1.7M252.8 244.1h1.7M252.8 249.3h1.7M252.8 254.4h1.7M252.8 259.5h1.7M252.8 264.7h1.7M252.8 269.8h1.7M252.8 275.0h1.7M252.8 280.1h1.7M252.8 285.2h1.7M252.8 290.4h1.7M252.8 295.5h1.7M252.8 300.7h1.7M252.8 305.8h1.7M252.8 310.9h1.7M252.8 316.1h1.7M252.8 321.2h1.7M252.8 326.3h1.7M252.8 331.5h1.7M252.8 336.6h1.7M252.8 341.8h1.7M252.8 346.9h1.7M252.8 352.0h1.7M252.8 357.2h1.7M252.8 362.3h1.7M252.8 367.4h1.7M252.8 372.6h1.7M252.8 377.7h1.7M252.8 382.9h1.7M296.7 136.2h1.7M296.7 141.4h1.7M296.7 146.5h1.7M296.7 151.7h1.7M296.7 156.8h1.7M296.7 161.9h1.7M296.7 167.1h1.7M296.7 172.2h1.7M296.7 177.3h1.7M296.7 182.5h1.7M296.7 187.6h1.7M296.7 192.8h1.7M296.7 197.9h1.7M296.7 203.0h1.7M296.7 208.2h1.7M296.7 213.3h1.7M296.7 218.4h1.7M296.7 223.6h1.7M296.7 228.7h1.7M296.7 233.9h1.7M296.7 239.0h1.7M296.7 244.1h1.7M296.7 249.3h1.7M296.7 254.4h1.7M296.7 259.5h1.7M296.7 264.7h1.7M296.7 269.8h1.7M296.7 275.0h1.7M296.7 280.1h1.7M296.7 285.2h1.7M296.7 290.4h1.7M296.7 295.5h1.7M296.7 300.7h1.7M296.7 305.8h1.7M296.7 310.9h1.7M296.7 316.1h1.7M296.7 321.2h1.7M296.7 326.3h1.7M296.7 331.5h1.7M296.7 336.6h1.7M296.7 341.8h1.7M296.7 346.9h1.7M296.7 352.0h1.7M296.7 357.2h1.7M296.7 362.3h1.7M296.7 367.4h1.7M296.7 372.6h1.7M296.7 377.7h1.7M296.7 382.9h1.7M340.6 136.2h1.7M340.6 141.4h1.7M340.6 146.5h1.7M340.6 151.7h1.7M340.6 156.8h1.7M340.6 161.9h1.7M340.6 167.1h1.7M340.6 172.2h1.7M340.6 177.3h1.7M340.6 182.5h1.7M340.6 187.6h1.7M340.6 192.8h1.7M340.6 197.9h1.7M340.6 203.0h1.7M340.6 208.2h1.7M340.6 213.3h1.7M340.6 218.4h1.7M340.6 223.6h1.7M340.6 228.7h1.7M340.6 233.9h1.7M340.6 239.0h1.7M340.6 244.1h1.7M340.6 249.3h1.7M340.6 254.4h1.7M340.6 259.5h1.7M340.6 264.7h1.7M340.6 269.8h1.7M340.6 275.0h1.7M340.6 280.1h1.7M340.6 285.2h1.7M340.6 290.4h1.7M340.6 295.5h1.7M340.6 300.7h1.7M340.6 305.8h1.7M340.6 310.9h1.7M340.6 316.1h1.7M340.6 321.2h1.7M340.6 326.3h1.7M340.6 331.5h1.7M340.6 336.6h1.7M340.6 341.8h1.7M340.6 346.9h1.7M340.6 352.0h1.7M340.6 357.2h1.7M340.6 362.3h1.7M340.6 367.4h1.7M340.6 372.6h1.7M340.6 377.7h1.7M340.6 382.9h1.7M384.5 136.2h1.7M384.5 141.4h1.7M384.5 146.5h1.7M384.5 151.7h1.7M384.5 156.8h1.7M384.5 161.9h1.7M384.5 167.1h1.7M384.5 172.2h1.7M384.5 177.3h1.7M384.5 182.5h1.7M384.5 187.6h1.7M384.5 192.8h1.7M384.5 197.9h1.7M384.5 203.0h1.7M384.5 208.2h1.7M384.5 213.3h1.7M384.5 218.4h1.7M384.5 223.6h1.7M384.5 228.7h1.7M384.5 233.9h1.7M384.5 239.0h1.7M384.5 244.1h1.7M384.5 249.3h1.7M384.5 254.4h1.7M384.5 259.5h1.7M384.5 264.7h1.7M384.5 269.8h1.7M384.5 275.0h1.7M384.5 280.1h1.7M384.5 285.2h1.7M384.5 290.4h1.7M384.5 295.5h1.7M384.5 300.7h1.7M384.5 305.8h1.7M384.5 310.9h1.7M384.5 316.1h1.7M384.5 321.2h1.7M384.5 326.3h1.7M384.5 331.5h1.7M384.5 336.6h1.7M384.5 341.8h1.7M384.5 346.9h1.7M384.5 352.0h1.7M384.5 357.2h1.7M384.5 362.3h1.7M384.5 367.4h1.7M384.5 372.6h1.7M384.5 377.7h1.7M384.5 382.9h1.7M428.4 136.2h1.7M428.4 141.4h1.7M428.4 146.5h1.7M428.4 151.7h1.7M428.4 156.8h1.7M428.4 161.9h1.7M428.4 167.1h1.7M428.4 172.2h1.7M428.4 177.3h1.7M428.4 182.5h1.7M428.4 187.6h1.7M428.4 192.8h1.7M428.4 197.9h1.7M428.4 203.0h1.7M428.4 208.2h1.7M428.4 213.3h1.7M428.4 218.4h1.7M428.4 223.6h1.7M428.4 228.7h1.7M428.4 233.9h1.7M428.4 239.0h1.7M428.4 244.1h1.7M428.4 249.3h1.7M428.4 254.4h1.7M428.4 259.5h1.7M428.4 264.7h1.7M428.4 269.8h1.7M428.4 275.0h1.7M428.4 280.1h1.7M428.4 285.2h1.7M428.4 290.4h1.7M428.4 295.5h1.7M428.4 300.7h1.7M428.4 305.8h1.7M428.4 310.9h1.7M428.4 316.1h1.7M428.4 321.2h1.7M428.4 326.3h1.7M428.4 331.5h1.7M428.4 336.6h1.7M428.4 341.8h1.7M428.4 346.9h1.7M428.4 352.0h1.7M428.4 357.2h1.7M428.4 362.3h1.7M428.4 367.4h1.7M428.4 372.6h1.7M428.4 377.7h1.7M428.4 382.9h1.7" stroke="#22a896" stroke-width="1" fill="none"/><path d="M42.8 155.9v1.7M51.6 155.9v1.7M60.4 155.9v1.7M69.1 155.9v1.7M86.7 155.9v1.7M95.5 155.9v1.7M104.3 155.9v1.7M113.1 155.9v1.7M130.6 155.9v1.7M139.4 155.9v1.7M148.2 155.9v1.7M157.0 155.9v1.7M174.5 155.9v1.7M183.3 155.9v1.7M192.1 155.9v1.7M200.9 155.9v1.7M218.5 155.9v1.7M227.2 155.9v1.7M236.0 155.9v1.7M244.8 155.9v1.7M262.4 155.9v1.7M271.2 155.9v1.7M280.0 155.9v1.7M288.7 155.9v1.7M306.3 155.9v1.7M315.1 155.9v1.7M323.9 155.9v1.7M332.7 155.9v1.7M350.2 155.9v1.7M359.0 155.9v1.7M367.8 155.9v1.7M376.6 155.9v1.7M394.1 155.9v1.7M402.9 155.9v1.7M411.7 155.9v1.7M420.5 155.9v1.7M438.1 155.9v1.7M446.8 155.9v1.7M455.6 155.9v1.7M464.4 155.9v1.7M42.8 181.6v1.7M51.6 181.6v1.7M60.4 181.6v1.7M69.1 181.6v1.7M86.7 181.6v1.7M95.5 181.6v1.7M104.3 181.6v1.7M113.1 181.6v1.7M130.6 181.6v1.7M139.4 181.6v1.7M148.2 181.6v1.7M157.0 181.6v1.7M174.5 181.6v1.7M183.3 181.6v1.7M192.1 181.6v1.7M200.9 181.6v1.7M218.5 181.6v1.7M227.2 181.6v1.7M236.0 181.6v1.7M244.8 181.6v1.7M262.4 181.6v1.7M271.2 181.6v1.7M280.0 181.6v1.7M288.7 181.6v1.7M306.3 181.6v1.7M315.1 181.6v1.7M323.9 181.6v1.7M332.7 181.6v1.7M350.2 181.6v1.7M359.0 181.6v1.7M367.8 181.6v1.7M376.6 181.6v1.7M394.1 181.6v1.7M402.9 181.6v1.7M411.7 181.6v1.7M420.5 181.6v1.7M438.1 181.6v1.7M446.8 181.6v1.7M455.6 181.6v1.7M464.4 181.6v1.7M42.8 207.3v1.7M51.6 207.3v1.7M60.4 207.3v1.7M69.1 207.3v1.7M86.7 207.3v1.7M95.5 207.3v1.7M104.3 207.3v1.7M113.1 207.3v1.7M130.6 207.3v1.7M139.4 207.3v1.7M148.2 207.3v1.7M157.0 207.3v1.7M174.5 207.3v1.7M183.3 207.3v1.7M192.1 207.3v1.7M200.9 207.3v1.7M218.5 207.3v1.7M227.2 207.3v1.7M236.0 207.3v1.7M244.8 207.3v1.7M262.4 207.3v1.7M271.2 207.3v1.7M280.0 207.3v1.7M288.7 207.3v1.7M306.3 207.3v1.7M315.1 207.3v1.7M323.9 207.3v1.7M332.7 207.3v1.7M350.2 207.3v1.7M359.0 207.3v1.7M367.8 207.3v1.7M376.6 207.3v1.7M394.1 207.3v1.7M402.9 207.3v1.7M411.7 207.3v1.7M420.5 207.3v1.7M438.1 207.3v1.7M446.8 207.3v1.7M455.6 207.3v1.7M464.4 207.3v1.7M42.8 233.0v1.7M51.6 233.0v1.7M60.4 233.0v1.7M69.1 233.0v1.7M86.7 233.0v1.7M95.5 233.0v1.7M104.3 233.0v1.7M113.1 233.0v1.7M130.6 233.0v1.7M139.4 233.0v1.7M148.2 233.0v1.7M157.0 233.0v1.7M174.5 233.0v1.7M183.3 233.0v1.7M192.1 233.0v1.7M200.9 233.0v1.7M218.5 233.0v1.7M227.2 233.0v1.7M236.0 233.0v1.7M244.8 233.0v1.7M262.4 233.0v1.7M271.2 233.0v1.7M280.0 233.0v1.7M288.7 233.0v1.7M306.3 233.0v1.7M315.1 233.0v1.7M323.9 233.0v1.7M332.7 233.0v1.7M350.2 233.0v1.7M359.0 233.0v1.7M367.8 233.0v1.7M376.6 233.0v1.7M394.1 233.0v1.7M402.9 233.0v1.7M411.7 233.0v1.7M420.5 233.0v1.7M438.1 233.0v1.7M446.8 233.0v1.7M455.6 233.0v1.7M464.4 233.0v1.7M42.8 258.7v1.7M51.6 258.7v1.7M60.4 258.7v1.7M69.1 258.7v1.7M86.7 258.7v1.7M95.5 258.7v1.7M104.3 258.7v1.7M113.1 258.7v1.7M130.6 258.7v1.7M139.4 258.7v1.7M148.2 258.7v1.7M157.0 258.7v1.7M174.5 258.7v1.7M183.3 258.7v1.7M192.1 258.7v1.7M200.9 258.7v1.7M218.5 258.7v1.7M227.2 258.7v1.7M236.0 258.7v1.7M244.8 258.7v1.7M262.4 258.7v1.7M271.2 258.7v1.7M280.0 258.7v1.7M288.7 258.7v1.7M306.3 258.7v1.7M315.1 258.7v1.7M323.9 258.7v1.7M332.7 258.7v1.7M350.2 258.7v1.7M359.0 258.7v1.7M367.8 258.7v1.7M376.6 258.7v1.7M394.1 258.7v1.7M402.9 258.7v1.7M411.7 258.7v1.7M420.5 258.7v1.7M438.1 258.7v1.7M446.8 258.7v1.7M455.6 258.7v1.7M464.4 258.7v1.7M42.8 284.4v1.7M51.6 284.4v1.7M60.4 284.4v1.7M69.1 284.4v1.7M86.7 284.4v1.7M95.5 284.4v1.7M104.3 284.4v1.7M113.1 284.4v1.7M130.6 284.4v1.7M139.4 284.4v1.7M148.2 284.4v1.7M157.0 284.4v1.7M174.5 284.4v1.7M183.3 284.4v1.7M192.1 284.4v1.7M200.9 284.4v1.7M218.5 284.4v1.7M227.2 284.4v1.7M236.0 284.4v1.7M244.8 284.4v1.7M262.4 284.4v1.7M271.2 284.4v1.7M280.0 284.4v1.7M288.7 284.4v1.7M306.3 284.4v1.7M315.1 284.4v1.7M323.9 284.4v1.7M332.7 284.4v1.7M350.2 284.4v1.7M359.0 284.4v1.7M367.8 284.4v1.7M376.6 284.4v1.7M394.1 284.4v1.7M402.9 284.4v1.7M411.7 284.4v1.7M420.5 284.4v1.7M438.1 284.4v1.7M446.8 284.4v1.7M455.6 284.4v1.7M464.4 284.4v1.7M42.8 310.1v1.7M51.6 310.1v1.7M60.4 310.1v1.7M69.1 310.1v1.7M86.7 310.1v1.7M95.5 310.1v1.7M104.3 310.1v1.7M113.1 310.1v1.7M130.6 310.1v1.7M139.4 310.1v1.7M148.2 310.1v1.7M157.0 310.1v1.7M174.5 310.1v1.7M183.3 310.1v1.7M192.1 310.1v1.7M200.9 310.1v1.7M218.5 310.1v1.7M227.2 310.1v1.7M236.0 310.1v1.7M244.8 310.1v1.7M262.4 310.1v1.7M271.2 310.1v1.7M280.0 310.1v1.7M288.7 310.1v1.7M306.3 310.1v1.7M315.1 310.1v1.7M323.9 310.1v1.7M332.7 310.1v1.7M350.2 310.1v1.7M359.0 310.1v1.7M367.8 310.1v1.7M376.6 310.1v1.7M394.1 310.1v1.7M402.9 310.1v1.7M411.7 310.1v1.7M420.5 310.1v1.7M438.1 310.1v1.7M446.8 310.1v1.7M455.6 310.1v1.7M464.4 310.1v1.7M42.8 335.8v1.7M51.6 335.8v1.7M60.4 335.8v1.7M69.1 335.8v1.7M86.7 335.8v1.7M95.5 335.8v1.7M104.3 335.8v1.7M113.1 335.8v1.7M130.6 335.8v1.7M139.4 335.8v1.7M148.2 335.8v1.7M157.0 335.8v1.7M174.5 335.8v1.7M183.3 335.8v1.7M192.1 335.8v1.7M200.9 335.8v1.7M218.5 335.8v1.7M227.2 335.8v1.7M236.0 335.8v1.7M244.8 335.8v1.7M262.4 335.8v1.7M271.2 335.8v1.7M280.0 335.8v1.7M288.7 335.8v1.7M306.3 335.8v1.7M315.1 335.8v1.7M323.9 335.8v1.7M332.7 335.8v1.7M350.2 335.8v1.7M359.0 335.8v1.7M367.8 335.8v1.7M376.6 335.8v1.7M394.1 335.8v1.7M402.9 335.8v1.7M411.7 335.8v1.7M420.5 335.8v1.7M438.1 335.8v1.7M446.8 335.8v1.7M455.6 335.8v1.7M464.4 335.8v1.7M42.8 361.5v1.7M51.6 361.5v1.7M60.4 361.5v1.7M69.1 361.5v1.7M86.7 361.5v1.7M95.5 361.5v1.7M104.3 361.5v1.7M113.1 361.5v1.7M130.6 361.5v1.7M139.4 361.5v1.7M148.2 361.5v1.7M157.0 361.5v1.7M174.5 361.5v1.7M183.3 361.5v1.7M192.1 361.5v1.7M200.9 361.5v1.7M218.5 361.5v1.7M227.2 361.5v1.7M236.0 361.5v1.7M244.8 361.5v1.7M262.4 361.5v1.7M271.2 361.5v1.7M280.0 361.5v1.7M288.7 361.5v1.7M306.3 361.5v1.7M315.1 361.5v1.7M323.9 361.5v1.7M332.7 361.5v1.7M350.2 361.5v1.7M359.0 361.5v1.7M367.8 361.5v1.7M376.6 361.5v1.7M394.1 361.5v1.7M402.9 361.5v1.7M411.7 361.5v1.7M420.5 361.5v1.7M438.1 361.5v1.7M446.8 361.5v1.7M455.6 361.5v1.7M464.4 361.5v1.7" stroke="#22a896" stroke-width="1" fill="none"/><polyline points="34.0,222.7 37.0,222.6 40.0,223.6 43.0,225.2 45.0,226.7 47.0,224.0 50.0,216.7 53.0,204.0 56.7,190.0 60.0,176.0 63.3,163.3 65.5,157.0 67.3,153.3 69.0,150.8 70.7,150.0 72.7,151.0 75.0,154.0 77.5,159.5 80.0,166.7 82.5,176.0 85.0,186.7 87.5,197.5 90.0,208.3 92.5,220.0 95.0,231.7 97.5,242.5 100.0,251.7 102.0,256.3 103.8,259.0 106.7,260.7 108.5,259.6 110.0,260.0 113.3,258.3 116.0,257.6 118.0,256.8 120.0,256.0 122.5,252.0 125.0,246.7 127.5,240.5 130.0,233.3 132.5,226.0 135.0,218.3 137.5,211.5 140.0,205.0 142.5,200.0 145.0,196.0 147.5,193.7 150.0,192.7 152.5,193.6 155.0,196.0 157.5,200.0 160.0,205.0 162.5,210.7 165.0,216.7 167.5,223.3 170.0,230.0 172.5,236.0 175.0,241.7 177.0,245.5 178.8,248.0 181.7,250.0 183.5,248.6 185.0,248.8 188.3,246.7 191.0,245.6 193.3,244.3 196.0,243.2 198.3,241.7 200.8,237.0 203.3,231.7 205.8,227.0 208.3,223.3 210.8,220.0 213.3,217.3 215.8,215.6 218.3,214.7 220.8,214.2 223.3,214.3 225.8,214.9 228.3,216.0 230.8,218.4 233.3,221.7 235.5,225.0 237.7,228.3 239.5,226.6 241.7,224.0 244.0,219.5 246.7,212.5 249.2,203.0 251.7,192.5 254.0,180.5 256.7,167.5 259.0,157.5 261.0,151.0 263.3,146.0 265.0,144.0 266.7,143.3 268.4,144.3 270.0,146.7 271.7,150.3 273.3,155.0 275.0,160.5 276.7,166.7 278.4,174.0 280.0,181.7 283.3,196.7 286.7,213.3 290.0,230.0 293.3,245.0 295.0,251.3 296.7,256.0 298.3,259.3 300.0,260.7 302.0,259.4 303.5,260.0 305.0,259.3 307.5,258.2 310.0,257.7 312.0,257.2 314.0,256.0 316.0,252.7 318.3,248.3 320.8,242.0 323.3,235.0 325.8,227.5 328.3,220.0 330.8,213.0 333.3,206.7 335.8,201.3 338.3,197.3 340.8,195.0 343.3,194.0 345.8,193.8 348.3,194.3 350.8,196.6 353.3,200.0 355.8,204.6 358.3,210.0 360.8,216.3 363.3,223.3 366.0,230.5 369.3,238.3 372.0,244.0 375.0,249.3 377.0,251.3 379.3,252.3 381.0,251.2 382.8,251.0 385.0,249.3 388.0,247.0 391.7,244.0 394.0,240.5 396.7,236.7 399.0,233.2 401.7,230.0 404.0,227.3 406.7,225.0 409.0,223.2 411.7,221.7 414.0,220.8 416.7,220.3 419.0,220.4 421.7,221.0 424.0,222.2 426.0,224.0 427.8,226.3 429.3,228.3 430.8,226.4 432.7,223.3 434.7,218.6 436.7,213.3 439.2,205.0 441.7,196.7 444.2,186.5 446.7,176.7 448.7,168.0 450.7,160.0 452.3,155.5 454.0,152.3 455.7,150.6 457.3,150.0 459.0,150.8 460.7,152.7 462.8,157.3 465.0,163.3 467.2,170.0 469.3,176.7 471.0,182.5 472.7,188.3" fill="none" stroke="#16c8c8" stroke-width="1.12" stroke-linejoin="round"/><polyline points="34.5,323.6 35.3,326.8 36.2,324.6 85.4,324.6 86.2,362.9 87.2,363.4 88.0,360.4 88.8,360.8 90.4,359.5 92.0,360.8 93.6,359.5 95.2,360.8 96.0,359.4 97.4,321.8 98.4,324.6 100.5,324.6 101.5,326.8 102.6,325.0 104.2,325.2 105.4,327.0 106.4,324.6 109.0,324.6 110.3,327.0 111.2,324.6 131.0,324.6 132.0,326.6 133.0,324.6 163.4,324.6 164.4,362.9 165.2,363.4 165.8,360.4 166.4,360.9 168.0,359.5 170.4,359.4 171.6,322.0 172.6,324.6 206.0,324.6 207.0,362.4 207.8,363.0 208.6,358.8 209.6,360.0 211.5,358.4 213.4,360.0 215.3,358.4 217.2,360.0 219.1,358.4 221.0,360.0 222.9,358.4 224.8,360.0 227.0,359.4 228.4,321.8 229.4,326.0 230.4,326.7 232.1,325.0 233.8,326.7 235.5,325.0 237.2,326.7 238.9,325.0 240.6,326.7 242.3,325.0 243.6,324.6 247.2,324.6 248.0,322.4 248.8,324.6 275.0,324.6 276.0,326.8 277.0,324.6 284.2,324.6 285.2,362.9 286.0,363.6 286.8,360.4 287.4,360.7 289.0,359.3 290.6,360.7 292.2,359.3 293.8,360.7 295.4,359.4 296.8,321.8 297.8,326.2 298.8,324.6 311.5,324.6 312.5,326.6 313.4,324.6 317.0,324.6 318.0,326.6 319.0,324.6 336.6,324.6 337.5,326.6 338.4,324.6 364.2,324.6 365.6,363.0 366.4,361.4 367.6,320.2 368.6,321.6 374.0,321.6 375.0,324.2 376.0,321.6 377.2,321.6 378.0,323.8 379.0,321.6 392.0,321.6 393.0,323.0 394.0,321.0 398.2,321.6 399.4,324.6 400.6,363.4 401.6,363.8 402.4,360.4 403.0,360.6 404.8,359.0 406.6,360.6 408.4,359.0 410.2,360.6 412.0,359.0 413.8,360.6 415.6,359.0 417.0,358.8 418.3,321.4 419.2,324.6 424.0,324.6 425.0,327.0 426.0,324.6 428.2,324.6 429.2,327.2 430.4,323.8 431.4,324.6 472.4,324.6" fill="none" stroke="#e6e614" stroke-width="0.98" stroke-linejoin="round"/><path d="M249.2 85.6 h8.2 v7.2 l-4.1 3.4 l-4.1 -3.4 z" fill="#f4e600"/><path d="M249.2 120.6 h8.2 v7.2 l-4.1 3.4 l-4.1 -3.4 z" fill="#f4e600"/><path d="M13.1 357.05 h15.9 l4.75 5.3 l-4.75 5.3 h-15.9 z" fill="#fafa00"/><path d="M13.1 228.9 h15.5 l5.1 5.35 l-5.1 5.35 h-15.5 z" fill="#00f6f6"/><path d="M473.8 192 l2.6 -3.7 h8.4 v7.4 h-8.4 z" fill="#08ecec"/><path d="M476.4 192 h6 M482.7 189.4 v5.2" stroke="#0a6a6a" stroke-width="0.8"/><rect x="7.5" y="397.5" width="75" height="34.2" fill="#2d3333" stroke="#1f877c" stroke-width="0.9"/><rect x="85.4" y="397.5" width="75.4" height="34.2" fill="#2d3333" stroke="#1f877c" stroke-width="0.9"/><rect x="423.7" y="397.5" width="75.1" height="34.4" fill="#2d3333" stroke="#1f877c" stroke-width="0.9"/><rect x="7.5" y="437.3" width="491.3" height="24.7" fill="#2d3333" stroke="#1f877c" stroke-width="0.9"/><path d="M441.4 74.4 h5.4 M441.4 82.8 h5.4 M444 74.4 v8.4 M440.8 78.6 h6.6 M444.2 78.6 l2.8 -2 M444.2 78.6 l2.8 2" stroke="#1fcaca" stroke-width="0.95" fill="none"/></svg><span id="t24" class="t ss" style="top:85.86px;font-size:8.00px;color:#3a3200;left:250.90px;transform-origin:0 0;transform:scaleX(0.981);">T</span><span id="t25" class="t ss" style="top:120.86px;font-size:8.00px;color:#3a3200;left:250.90px;transform-origin:0 0;transform:scaleX(0.981);">T</span><span id="t26" class="t sf" style="top:73.05px;font-size:9.60px;color:#f2f21a;left:8.80px;transform-origin:0 0;transform:scaleX(0.844);">Run</span><span id="t27" class="t sf" style="top:72.61px;font-size:10.20px;color:#20d0d0;left:419.00px;transform-origin:0 0;transform:scaleX(0.795);text-shadow:0.2px 0 0 #20d0d0;">Auto</span><span id="t28" class="t sf" style="top:72.61px;font-size:10.20px;color:#20d0d0;left:451.00px;transform-origin:0 0;transform:scaleX(0.790);text-shadow:0.2px 0 0 #20d0d0;">CH2</span><span id="t29" class="t sf" style="top:72.61px;font-size:10.20px;color:#20d0d0;left:470.00px;transform-origin:0 0;transform:scaleX(0.857);text-shadow:0.2px 0 0 #20d0d0;">3.300 V</span><span id="t30" class="t sf" style="top:357.92px;font-size:7.50px;color:#6a5a00;left:14.00px;transform-origin:0 0;transform:scaleX(0.864);">CH1</span><span id="t31" class="t sf" style="top:229.92px;font-size:7.50px;color:#0a6060;left:14.00px;transform-origin:0 0;transform:scaleX(0.896);">CH2</span><span id="t32" class="t sf" style="top:398.89px;font-size:10.00px;color:#eaea18;left:9.75px;transform-origin:0 0;transform:scaleX(0.793);text-shadow:0.25px 0 0 #eaea18;">CH1</span><span id="t33" class="t sf" style="top:398.89px;font-size:10.00px;color:#eaea18;right:560.00px;transform-origin:100% 0;transform:scaleX(0.883);text-shadow:0.25px 0 0 #eaea18;">X10&nbsp; DC</span><span id="t34" class="t sf" style="top:408.59px;font-size:10.00px;color:#eaea18;right:560.00px;transform-origin:100% 0;transform:scaleX(0.850);text-shadow:0.25px 0 0 #eaea18;">5 V/div</span><span id="t35" class="t sf" style="top:418.69px;font-size:10.00px;color:#eaea18;right:560.00px;transform-origin:100% 0;transform:scaleX(0.876);text-shadow:0.25px 0 0 #eaea18;">-19.88 V</span><span id="t36" class="t sf" style="top:398.89px;font-size:10.00px;color:#20d0d0;left:88.00px;transform-origin:0 0;transform:scaleX(0.807);text-shadow:0.25px 0 0 #20d0d0;">CH2</span><span id="t37" class="t sf" style="top:398.89px;font-size:10.00px;color:#20d0d0;right:482.00px;transform-origin:100% 0;transform:scaleX(0.875);text-shadow:0.25px 0 0 #20d0d0;">X10&nbsp; DC</span><span id="t38" class="t sf" style="top:408.59px;font-size:10.00px;color:#20d0d0;right:482.00px;transform-origin:100% 0;transform:scaleX(0.844);text-shadow:0.25px 0 0 #20d0d0;">2 V/div</span><span id="t39" class="t sf" style="top:418.69px;font-size:10.00px;color:#20d0d0;right:482.00px;transform-origin:100% 0;transform:scaleX(0.878);text-shadow:0.25px 0 0 #20d0d0;">2.00 V</span><span id="t40" class="t sf" style="top:398.89px;font-size:10.00px;color:#eaea18;left:426.60px;transform-origin:0 0;transform:scaleX(0.862);text-shadow:0.25px 0 0 #eaea18;">Time</span><span id="t41" class="t sf" style="top:408.89px;font-size:10.00px;color:#eaea18;right:143.40px;transform-origin:100% 0;transform:scaleX(0.874);text-shadow:0.25px 0 0 #eaea18;">10 us/div</span><span id="t42" class="t sf" style="top:418.69px;font-size:10.00px;color:#eaea18;left:426.60px;transform-origin:0 0;transform:scaleX(0.822);text-shadow:0.25px 0 0 #eaea18;">1MB</span><span id="t43" class="t sf" style="top:418.69px;font-size:10.00px;color:#eaea18;right:143.40px;transform-origin:100% 0;transform:scaleX(0.895);text-shadow:0.25px 0 0 #eaea18;">8 MSa/s</span><span id="t44" class="t sf" style="top:439.09px;font-size:10.00px;color:#eaea18;left:9.70px;transform-origin:0 0;transform:scaleX(0.869);text-shadow:0.25px 0 0 #eaea18;">Vmin= -346.909 mV</span><span id="t45" class="t sf" style="top:439.09px;font-size:10.00px;color:#eaea18;left:100.60px;transform-origin:0 0;transform:scaleX(0.842);text-shadow:0.25px 0 0 #eaea18;">Vmax= 7.671 V</span><span id="t46" class="t sf" style="top:439.09px;font-size:10.00px;color:#eaea18;left:190.20px;transform-origin:0 0;transform:scaleX(0.878);text-shadow:0.25px 0 0 #eaea18;">Vpp= 8.017 V</span><span id="t47" class="t sf" style="top:439.09px;font-size:10.00px;color:#eaea18;left:280.60px;transform-origin:0 0;transform:scaleX(0.877);text-shadow:0.25px 0 0 #eaea18;">F= 62.016 KHz</span><span id="t48" class="t sf" style="top:448.89px;font-size:10.00px;color:#20d0d0;left:9.70px;transform-origin:0 0;transform:scaleX(0.862);text-shadow:0.25px 0 0 #20d0d0;">Vmin= -2.118 V</span><span id="t49" class="t sf" style="top:448.89px;font-size:10.00px;color:#20d0d0;left:100.60px;transform-origin:0 0;transform:scaleX(0.842);text-shadow:0.25px 0 0 #20d0d0;">Vmax= 6.751 V</span><span id="t50" class="t sf" style="top:448.89px;font-size:10.00px;color:#20d0d0;left:190.20px;transform-origin:0 0;transform:scaleX(0.878);text-shadow:0.25px 0 0 #20d0d0;">Vpp= 8.869 V</span><span id="t51" class="t sf" style="top:448.89px;font-size:10.00px;color:#20d0d0;left:280.60px;transform-origin:0 0;transform:scaleX(0.877);text-shadow:0.25px 0 0 #20d0d0;">F= 31.621 KHz</span><div style="left:506.40px;top:70.00px;width:133.60px;height:396.00px;background:#f0f0f0;"></div><div style="left:505.80px;top:72.60px;width:131.40px;height:19.00px;border:0.8px solid #e5e5e5;box-shadow:0.8px 0.8px 0 #f9f9f9, inset 0.8px 0.8px 0 #f9f9f9;box-sizing:border-box;"></div><div style="left:505.80px;top:94.60px;width:131.40px;height:53.80px;border:0.8px solid #e5e5e5;box-shadow:0.8px 0.8px 0 #f9f9f9, inset 0.8px 0.8px 0 #f9f9f9;box-sizing:border-box;"></div><div style="left:505.80px;top:149.60px;width:131.40px;height:50.80px;border:0.8px solid #e5e5e5;box-shadow:0.8px 0.8px 0 #f9f9f9, inset 0.8px 0.8px 0 #f9f9f9;box-sizing:border-box;"></div><div style="left:505.80px;top:202.60px;width:131.40px;height:57.00px;border:0.8px solid #e5e5e5;box-shadow:0.8px 0.8px 0 #f9f9f9, inset 0.8px 0.8px 0 #f9f9f9;box-sizing:border-box;"></div><div style="left:505.80px;top:261.60px;width:131.40px;height:166.00px;border:0.8px solid #e5e5e5;box-shadow:0.8px 0.8px 0 #f9f9f9, inset 0.8px 0.8px 0 #f9f9f9;box-sizing:border-box;"></div><div style="left:520.70px;top:76.40px;width:36.00px;height:12.80px;background:#fdfdfd;border:0.8px solid #d2d2d2;border-radius:2.4px;box-sizing:border-box;box-shadow:0 0.5px 0.6px #e2e2e2;"></div><span id="t52" class="t ss" style="top:78.04px;font-size:7.80px;color:#222;left:531.00px;transform-origin:0 0;transform:scaleX(0.910);">Auto</span><div style="left:587.40px;top:76.40px;width:34.40px;height:12.80px;background:#fdfdfd;border:0.8px solid #d2d2d2;border-radius:2.4px;box-sizing:border-box;box-shadow:0 0.5px 0.6px #e2e2e2;"></div><span id="t53" class="t ss" style="top:78.04px;font-size:7.80px;color:#222;left:594.40px;transform-origin:0 0;transform:scaleX(0.905);">Pause</span><div style="left:508.80px;top:98.90px;width:31.20px;height:11.30px;background:#f7f7f7;border-radius:2px;box-shadow:0 0 0 0.6px #e8e8e8;"></div><svg style="left:511.10px;top:99.35px;" width="11" height="11" viewBox="0 0 11 11"><circle cx="5.4" cy="5.4" r="4.9" fill="#2a2f2a"/><circle cx="5.4" cy="5.4" r="3.7" fill="#10f410"/><circle cx="4.5" cy="4.3" r="1.4" fill="#9dff9d" opacity="0.75"/></svg><span id="t54" class="t ss" style="top:99.49px;font-size:8.30px;color:#141414;left:523.00px;transform-origin:0 0;transform:scaleX(0.825);text-shadow:0.15px 0 0 #141414;">CH1</span><div style="left:507.70px;top:114.40px;width:33.20px;height:13.30px;background:#ffffff;border:1px solid #3a86d6;box-sizing:border-box;"></div><span id="t55" class="t ss" style="top:117.42px;font-size:7.60px;color:#151515;left:510.00px;transform-origin:0 0;transform:scaleX(0.806);text-shadow:0.2px 0 0 #151515;">X10</span><svg style="left:532.60px;top:119.80px;" width="5.6" height="3.8" viewBox="0 0 5.6 3.8"><path d="M0.4 0.5 L2.8 3 L5.2 0.5" stroke="#555" stroke-width="0.8" fill="none" stroke-linecap="round" stroke-linejoin="round" /></svg><div style="left:508.70px;top:133.90px;width:31.50px;height:11.70px;background:#fdfdfd;border:0.8px solid #d2d2d2;border-radius:2.4px;box-sizing:border-box;box-shadow:0 0.5px 0.6px #e2e2e2;"></div><span id="t56" class="t ss" style="top:134.56px;font-size:8.00px;color:#1a1a1a;left:510.90px;transform-origin:0 0;transform:scaleX(0.790);">More</span><svg style="left:530.80px;top:138.30px;" width="6.2" height="3.8" viewBox="0 0 6.2 3.8"><path d="M0.2 0.3 H6 L3.1 3.5 Z" fill="#3563b4"/></svg><svg style="left:545.00px;top:96.00px;" width="92" height="52" viewBox="545 96 92 52"><defs><linearGradient id="kg124" x1="0.15" y1="0.1" x2="0.85" y2="0.95"><stop offset="0" stop-color="#f7f7f7"/><stop offset="0.55" stop-color="#dedede"/><stop offset="1" stop-color="#bcbcbc"/></linearGradient></defs><line x1="587.19" y1="114.79" x2="584.50" y2="112.10" stroke="#3a3a3a" stroke-width="0.9"/><line x1="607.41" y1="114.79" x2="610.10" y2="112.10" stroke="#3a3a3a" stroke-width="0.9"/><line x1="587.19" y1="135.01" x2="584.50" y2="137.70" stroke="#3a3a3a" stroke-width="0.9"/><line x1="607.41" y1="135.01" x2="610.10" y2="137.70" stroke="#3a3a3a" stroke-width="0.9"/><line x1="593.52" y1="110.80" x2="593.03" y2="108.96" stroke="#505050" stroke-width="0.7"/><line x1="601.08" y1="110.80" x2="601.57" y2="108.96" stroke="#505050" stroke-width="0.7"/><line x1="583.20" y1="128.68" x2="581.36" y2="129.17" stroke="#505050" stroke-width="0.7"/><line x1="583.20" y1="121.12" x2="581.36" y2="120.63" stroke="#505050" stroke-width="0.7"/><line x1="611.40" y1="121.12" x2="613.24" y2="120.63" stroke="#505050" stroke-width="0.7"/><line x1="611.40" y1="128.68" x2="613.24" y2="129.17" stroke="#505050" stroke-width="0.7"/><circle cx="597.3" cy="124.9" r="12.3" fill="url(#kg124)"/><circle cx="599.7" cy="117.6" r="3.1" fill="#4b6b22"/><circle cx="599.4" cy="117.3" r="1.6" fill="#5a7a2a"/></svg><span id="t57" class="t sf" style="top:108.19px;font-size:8.20px;color:#1c1c26;left:573.40px;transform-origin:0 0;transform:scaleX(0.879);">1V</span><span id="t58" class="t sf" style="top:108.19px;font-size:8.20px;color:#1c1c26;left:611.80px;transform-origin:0 0;transform:scaleX(0.921);">10V</span><span id="t59" class="t sf" style="top:132.49px;font-size:8.20px;color:#1c1c26;left:559.60px;transform-origin:0 0;transform:scaleX(0.904);">100mV</span><span id="t60" class="t sf" style="top:132.49px;font-size:8.20px;color:#1c1c26;left:611.80px;transform-origin:0 0;transform:scaleX(0.901);">100V</span><div style="left:508.80px;top:151.65px;width:31.20px;height:11.30px;background:#f7f7f7;border-radius:2px;box-shadow:0 0 0 0.6px #e8e8e8;"></div><svg style="left:511.10px;top:152.10px;" width="11" height="11" viewBox="0 0 11 11"><circle cx="5.4" cy="5.4" r="4.9" fill="#2a2f2a"/><circle cx="5.4" cy="5.4" r="3.7" fill="#10f410"/><circle cx="4.5" cy="4.3" r="1.4" fill="#9dff9d" opacity="0.75"/></svg><span id="t61" class="t ss" style="top:152.24px;font-size:8.30px;color:#141414;left:523.00px;transform-origin:0 0;transform:scaleX(0.825);text-shadow:0.15px 0 0 #141414;">CH2</span><div style="left:507.70px;top:167.80px;width:33.20px;height:13.30px;background:#c3c3c3;border:1px solid #3a86d6;box-sizing:border-box;"></div><span id="t62" class="t ss" style="top:170.82px;font-size:7.60px;color:#151515;left:510.00px;transform-origin:0 0;transform:scaleX(0.806);text-shadow:0.2px 0 0 #151515;">X10</span><svg style="left:532.60px;top:173.20px;" width="5.6" height="3.8" viewBox="0 0 5.6 3.8"><path d="M0.4 0.5 L2.8 3 L5.2 0.5" stroke="#555" stroke-width="0.8" fill="none" stroke-linecap="round" stroke-linejoin="round" /></svg><div style="left:508.70px;top:187.30px;width:31.50px;height:11.70px;background:#fdfdfd;border:0.8px solid #d2d2d2;border-radius:2.4px;box-sizing:border-box;box-shadow:0 0.5px 0.6px #e2e2e2;"></div><span id="t63" class="t ss" style="top:187.96px;font-size:8.00px;color:#1a1a1a;left:510.90px;transform-origin:0 0;transform:scaleX(0.790);">More</span><svg style="left:530.80px;top:191.70px;" width="6.2" height="3.8" viewBox="0 0 6.2 3.8"><path d="M0.2 0.3 H6 L3.1 3.5 Z" fill="#3563b4"/></svg><svg style="left:545.00px;top:150.30px;" width="92" height="52" viewBox="545 150.3 92 52"><defs><linearGradient id="kg179" x1="0.15" y1="0.1" x2="0.85" y2="0.95"><stop offset="0" stop-color="#f7f7f7"/><stop offset="0.55" stop-color="#dedede"/><stop offset="1" stop-color="#bcbcbc"/></linearGradient></defs><line x1="587.09" y1="168.99" x2="584.40" y2="166.30" stroke="#3a3a3a" stroke-width="0.9"/><line x1="607.31" y1="168.99" x2="610.00" y2="166.30" stroke="#3a3a3a" stroke-width="0.9"/><line x1="587.09" y1="189.21" x2="584.40" y2="191.90" stroke="#3a3a3a" stroke-width="0.9"/><line x1="607.31" y1="189.21" x2="610.00" y2="191.90" stroke="#3a3a3a" stroke-width="0.9"/><line x1="593.42" y1="165.00" x2="592.93" y2="163.16" stroke="#505050" stroke-width="0.7"/><line x1="600.98" y1="165.00" x2="601.47" y2="163.16" stroke="#505050" stroke-width="0.7"/><line x1="583.10" y1="182.88" x2="581.26" y2="183.37" stroke="#505050" stroke-width="0.7"/><line x1="583.10" y1="175.32" x2="581.26" y2="174.83" stroke="#505050" stroke-width="0.7"/><line x1="611.30" y1="175.32" x2="613.14" y2="174.83" stroke="#505050" stroke-width="0.7"/><line x1="611.30" y1="182.88" x2="613.14" y2="183.37" stroke="#505050" stroke-width="0.7"/><circle cx="597.2" cy="179.1" r="12.3" fill="url(#kg179)"/><circle cx="595.4" cy="172" r="3.1" fill="#4b6b22"/><circle cx="595.1" cy="171.7" r="1.6" fill="#5a7a2a"/></svg><span id="t64" class="t sf" style="top:162.49px;font-size:8.20px;color:#1c1c26;left:573.40px;transform-origin:0 0;transform:scaleX(0.879);">1V</span><span id="t65" class="t sf" style="top:162.49px;font-size:8.20px;color:#1c1c26;left:611.80px;transform-origin:0 0;transform:scaleX(0.921);">10V</span><span id="t66" class="t sf" style="top:186.79px;font-size:8.20px;color:#1c1c26;left:559.60px;transform-origin:0 0;transform:scaleX(0.904);">100mV</span><span id="t67" class="t sf" style="top:186.79px;font-size:8.20px;color:#1c1c26;left:611.80px;transform-origin:0 0;transform:scaleX(0.901);">100V</span><div style="left:508.70px;top:243.00px;width:31.50px;height:11.70px;background:#fdfdfd;border:0.8px solid #d2d2d2;border-radius:2.4px;box-sizing:border-box;box-shadow:0 0.5px 0.6px #e2e2e2;"></div><span id="t68" class="t ss" style="top:243.66px;font-size:8.00px;color:#1a1a1a;left:510.90px;transform-origin:0 0;transform:scaleX(0.790);">More</span><svg style="left:530.80px;top:247.40px;" width="6.2" height="3.8" viewBox="0 0 6.2 3.8"><path d="M0.2 0.3 H6 L3.1 3.5 Z" fill="#3563b4"/></svg><svg style="left:545.00px;top:203.00px;" width="92" height="56" viewBox="545 203 92 56"><defs><linearGradient id="kg234" x1="0.15" y1="0.1" x2="0.85" y2="0.95"><stop offset="0" stop-color="#f7f7f7"/><stop offset="0.55" stop-color="#dedede"/><stop offset="1" stop-color="#bcbcbc"/></linearGradient></defs><line x1="582.68" y1="244.82" x2="579.42" y2="248.08" stroke="#3a3a3a" stroke-width="1.05"/><line x1="578.90" y1="238.28" x2="574.45" y2="239.47" stroke="#3a3a3a" stroke-width="1.05"/><line x1="578.90" y1="230.72" x2="574.45" y2="229.53" stroke="#3a3a3a" stroke-width="1.05"/><line x1="582.68" y1="224.18" x2="579.42" y2="220.92" stroke="#3a3a3a" stroke-width="1.05"/><line x1="589.22" y1="220.40" x2="588.03" y2="215.95" stroke="#3a3a3a" stroke-width="1.05"/><line x1="596.78" y1="220.40" x2="597.97" y2="215.95" stroke="#3a3a3a" stroke-width="1.05"/><line x1="603.32" y1="224.18" x2="606.58" y2="220.92" stroke="#3a3a3a" stroke-width="1.05"/><line x1="607.10" y1="230.72" x2="611.55" y2="229.53" stroke="#3a3a3a" stroke-width="1.05"/><line x1="607.10" y1="238.28" x2="611.55" y2="239.47" stroke="#3a3a3a" stroke-width="1.05"/><line x1="603.32" y1="244.82" x2="606.58" y2="248.08" stroke="#3a3a3a" stroke-width="1.05"/><line x1="580.79" y1="243.05" x2="578.83" y2="244.42" stroke="#505050" stroke-width="0.85"/><line x1="579.50" y1="240.80" x2="577.32" y2="241.81" stroke="#505050" stroke-width="0.85"/><line x1="578.16" y1="235.80" x2="575.77" y2="236.01" stroke="#505050" stroke-width="0.85"/><line x1="578.16" y1="233.20" x2="575.77" y2="232.99" stroke="#505050" stroke-width="0.85"/><line x1="579.50" y1="228.20" x2="577.32" y2="227.19" stroke="#505050" stroke-width="0.85"/><line x1="580.79" y1="225.95" x2="578.83" y2="224.58" stroke="#505050" stroke-width="0.85"/><line x1="584.45" y1="222.29" x2="583.08" y2="220.33" stroke="#505050" stroke-width="0.85"/><line x1="586.70" y1="221.00" x2="585.69" y2="218.82" stroke="#505050" stroke-width="0.85"/><line x1="591.70" y1="219.66" x2="591.49" y2="217.27" stroke="#505050" stroke-width="0.85"/><line x1="594.30" y1="219.66" x2="594.51" y2="217.27" stroke="#505050" stroke-width="0.85"/><line x1="599.30" y1="221.00" x2="600.31" y2="218.82" stroke="#505050" stroke-width="0.85"/><line x1="601.55" y1="222.29" x2="602.92" y2="220.33" stroke="#505050" stroke-width="0.85"/><line x1="605.21" y1="225.95" x2="607.17" y2="224.58" stroke="#505050" stroke-width="0.85"/><line x1="606.50" y1="228.20" x2="608.68" y2="227.19" stroke="#505050" stroke-width="0.85"/><line x1="607.84" y1="233.20" x2="610.23" y2="232.99" stroke="#505050" stroke-width="0.85"/><line x1="607.84" y1="235.80" x2="610.23" y2="236.01" stroke="#505050" stroke-width="0.85"/><line x1="606.50" y1="240.80" x2="608.68" y2="241.81" stroke="#505050" stroke-width="0.85"/><line x1="605.21" y1="243.05" x2="607.17" y2="244.42" stroke="#505050" stroke-width="0.85"/><circle cx="593" cy="234.5" r="13.8" fill="url(#kg234)"/><circle cx="587.1" cy="228.4" r="3.1" fill="#4b6b22"/><circle cx="586.8" cy="228.1" r="1.6" fill="#5a7a2a"/></svg><span id="t69" class="t sf" style="top:207.59px;font-size:8.20px;color:#1c1c26;left:574.40px;transform-origin:0 0;">100us</span><span id="t70" class="t sf" style="top:207.59px;font-size:8.20px;color:#1c1c26;left:598.60px;transform-origin:0 0;">1ms</span><span id="t71" class="t sf" style="top:214.69px;font-size:8.20px;color:#1c1c26;left:561.10px;transform-origin:0 0;transform:scaleX(1.008);">10us</span><span id="t72" class="t sf" style="top:215.09px;font-size:8.20px;color:#1c1c26;left:608.00px;transform-origin:0 0;transform:scaleX(1.014);">10ms</span><span id="t73" class="t sf" style="top:223.29px;font-size:8.20px;color:#1c1c26;left:561.10px;transform-origin:0 0;transform:scaleX(0.958);">1us</span><span id="t74" class="t sf" style="top:223.99px;font-size:8.20px;color:#1c1c26;left:612.70px;transform-origin:0 0;transform:scaleX(1.012);">100ms</span><span id="t75" class="t sf" style="top:232.59px;font-size:8.20px;color:#1c1c26;left:552.50px;transform-origin:0 0;">100ns</span><span id="t76" class="t sf" style="top:234.09px;font-size:8.20px;color:#1c1c26;left:612.70px;transform-origin:0 0;transform:scaleX(0.920);">1s</span><span id="t77" class="t sf" style="top:241.49px;font-size:8.20px;color:#1c1c26;left:561.10px;transform-origin:0 0;transform:scaleX(1.008);">10ns</span><span id="t78" class="t sf" style="top:242.39px;font-size:8.20px;color:#1c1c26;left:608.30px;transform-origin:0 0;transform:scaleX(0.976);">10s</span><span id="t79" class="t ss" style="top:266.62px;font-size:7.60px;color:#1c1c1c;left:509.60px;transform-origin:0 0;transform:scaleX(0.864);text-shadow:0.15px 0 0 #1c1c1c;">Trigger Mode</span><div style="left:555.00px;top:264.50px;width:78.10px;height:13.00px;background:linear-gradient(#c8c8c8,#bfbfbf);border:1px solid #3a86d6;box-sizing:border-box;"></div><span id="t80" class="t ss" style="top:266.87px;font-size:7.60px;color:#151515;left:557.10px;transform-origin:0 0;transform:scaleX(0.883);">Auto</span><svg style="left:624.60px;top:269.40px;" width="5.6" height="3.8" viewBox="0 0 5.6 3.8"><path d="M0.4 0.5 L2.8 3 L5.2 0.5" stroke="#555" stroke-width="0.8" fill="none" stroke-linecap="round" stroke-linejoin="round" /></svg><span id="t81" class="t ss" style="top:282.62px;font-size:7.60px;color:#1c1c1c;left:509.60px;transform-origin:0 0;transform:scaleX(0.865);text-shadow:0.15px 0 0 #1c1c1c;">Trigger Source</span><div style="left:555.00px;top:279.50px;width:78.10px;height:12.90px;background:linear-gradient(#c8c8c8,#bfbfbf);border:1px solid #3a86d6;box-sizing:border-box;"></div><span id="t82" class="t ss" style="top:281.62px;font-size:7.60px;color:#151515;left:557.10px;transform-origin:0 0;transform:scaleX(0.822);">CH2</span><svg style="left:624.60px;top:284.35px;" width="5.6" height="3.8" viewBox="0 0 5.6 3.8"><path d="M0.4 0.5 L2.8 3 L5.2 0.5" stroke="#555" stroke-width="0.8" fill="none" stroke-linecap="round" stroke-linejoin="round" /></svg><span id="t83" class="t ss" style="top:298.37px;font-size:7.60px;color:#1c1c1c;left:509.60px;transform-origin:0 0;transform:scaleX(0.877);text-shadow:0.15px 0 0 #1c1c1c;">Trigger Style</span><div style="left:555.00px;top:294.00px;width:78.10px;height:12.90px;background:linear-gradient(#c8c8c8,#bfbfbf);border:1px solid #3a86d6;box-sizing:border-box;"></div><span id="t84" class="t ss" style="top:296.62px;font-size:7.60px;color:#151515;left:557.10px;transform-origin:0 0;transform:scaleX(0.845);">Edge</span><svg style="left:624.60px;top:298.85px;" width="5.6" height="3.8" viewBox="0 0 5.6 3.8"><path d="M0.4 0.5 L2.8 3 L5.2 0.5" stroke="#555" stroke-width="0.8" fill="none" stroke-linecap="round" stroke-linejoin="round" /></svg><span id="t85" class="t ss" style="top:315.37px;font-size:7.60px;color:#1c1c1c;left:509.60px;transform-origin:0 0;transform:scaleX(0.872);text-shadow:0.15px 0 0 #1c1c1c;">Trigger Level</span><div style="left:551.20px;top:315.30px;width:53.20px;height:12.00px;background:#fff;border:0.9px solid #a4c6ec;border-radius:1.5px;box-sizing:border-box;"></div><span id="t86" class="t ss" style="top:317.12px;font-size:7.60px;color:#111;left:570.00px;transform-origin:0 0;transform:scaleX(0.895);"><span style="color:#9c9c9c">0 00</span>3.300</span><div style="left:605.60px;top:316.00px;width:27.00px;height:10.90px;background:#f5f5f5;"></div><span id="t87" class="t ss" style="top:316.33px;font-size:8.20px;color:#151515;left:607.50px;transform-origin:0 0;transform:scaleX(0.841);">V</span><svg style="left:625.00px;top:319.90px;" width="5.6" height="3.8" viewBox="0 0 5.6 3.8"><path d="M0.4 0.5 L2.8 3 L5.2 0.5" stroke="#555" stroke-width="0.8" fill="none" stroke-linecap="round" stroke-linejoin="round" /></svg><span id="t88" class="t ss" style="top:335.72px;font-size:7.60px;color:#1c1c1c;left:509.60px;transform-origin:0 0;transform:scaleX(0.900);text-shadow:0.15px 0 0 #1c1c1c;">Trigger Sensitivity(0-1.0)</span><div style="left:601.50px;top:336.30px;width:18.20px;height:11.40px;background:#fcfcfc;"></div><div style="left:601.00px;top:347.50px;width:19.30px;height:1.00px;background:#555;"></div><span id="t89" class="t ss" style="top:337.69px;font-size:7.80px;color:#111;left:603.10px;transform-origin:0 0;transform:scaleX(1.005);">0.4</span><span id="t90" class="t ss" style="top:335.87px;font-size:7.60px;color:#1c1c1c;left:621.50px;transform-origin:0 0;transform:scaleX(0.900);text-shadow:0.15px 0 0 #1c1c1c;">div</span><span id="t91" class="t ss" style="top:349.72px;font-size:7.60px;color:#1c1c1c;left:509.60px;transform-origin:0 0;transform:scaleX(0.906);text-shadow:0.15px 0 0 #1c1c1c;">Trigger Front Percent(1-99)</span><div style="left:609.40px;top:351.20px;width:13.20px;height:11.40px;background:#fcfcfc;"></div><div style="left:608.90px;top:362.40px;width:14.20px;height:1.00px;background:#555;"></div><span id="t92" class="t ss" style="top:352.34px;font-size:7.80px;color:#111;left:611.25px;transform-origin:0 0;transform:scaleX(0.840);">50</span><span id="t93" class="t ss" style="top:350.02px;font-size:7.60px;color:#1c1c1c;left:625.90px;transform-origin:0 0;transform:scaleX(0.931);text-shadow:0.15px 0 0 #1c1c1c;">%</span><div style="left:548.80px;top:366.00px;width:45.40px;height:12.00px;background:#f4f4f4;border:0.8px solid #dedede;border-radius:2.4px;box-sizing:border-box;"></div><span id="t94" class="t ss" style="top:367.92px;font-size:7.60px;color:#8a8a8a;left:562.60px;transform-origin:0 0;transform:scaleX(0.906);">Force</span><div style="left:0.00px;top:466.60px;width:640.00px;height:13.40px;background:linear-gradient(#dbe8fa 0,#d0e1f8 28%,#b6cff0 46%,#b9d1f1 78%,#c4d9f5 100%);border-top:0.8px solid #93aed8;border-bottom:0.6px solid #a2a2a2;box-sizing:border-box;"></div><span id="t95" class="t ss" style="top:469.92px;font-size:7.60px;color:#1b3b8a;left:2.25px;transform-origin:0 0;transform:scaleX(0.877);text-shadow:0.2px 0 0 #1b3b8a;">Ready</span><div style="left:430.00px;top:468.50px;width:0.80px;height:10.50px;background:#a3bde2;box-shadow:0.8px 0 0 #e8f0fc;"></div><span id="t96" class="t ss" style="top:469.92px;font-size:7.60px;color:#1b3b8a;left:432.80px;transform-origin:0 0;transform:scaleX(0.880);text-shadow:0.2px 0 0 #1b3b8a;">ISDS205A(1.1)(2)Connected</span><div style="left:629.40px;top:468.50px;width:0.80px;height:10.50px;background:#a3bde2;box-shadow:0.8px 0 0 #e8f0fc;"></div><svg style="left:632.00px;top:471.00px;" width="8" height="8" viewBox="0 0 8 8"><g fill="#4a68a4"><rect x="5" y="0.6" width="1.4" height="1.4"/><rect x="2.6" y="3" width="1.4" height="1.4"/><rect x="5" y="3" width="1.4" height="1.4"/><rect x="0.2" y="5.4" width="1.4" height="1.4"/><rect x="2.6" y="5.4" width="1.4" height="1.4"/><rect x="5" y="5.4" width="1.4" height="1.4"/></g></svg><div style="left:0.00px;top:69.00px;width:2.00px;height:397.60px;background:#f2f2f2;"></div></div></body></html>
